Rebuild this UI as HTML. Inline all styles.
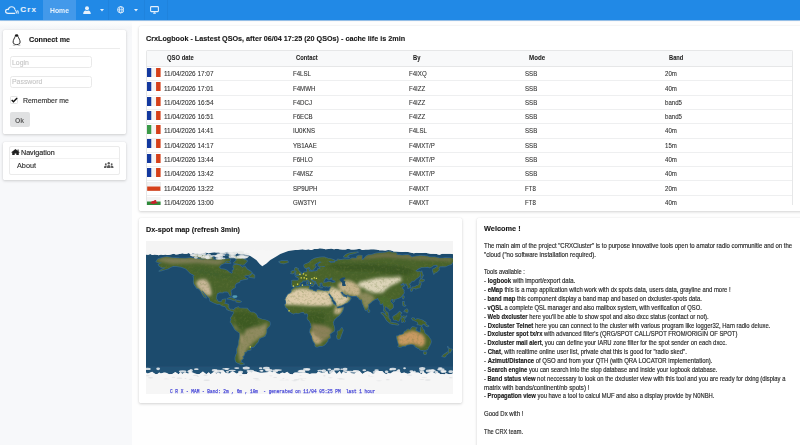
<!DOCTYPE html>
<html><head><meta charset="utf-8">
<style>
*{margin:0;padding:0;box-sizing:border-box}
html,body{width:800px;height:445px;overflow:hidden;background:#fefefe;font-family:"Liberation Sans",sans-serif;color:#333}
.abs{position:absolute}
#nav{left:0;top:0;width:800px;height:20.4px;background:#2189e6;box-shadow:0 1px 0 rgba(40,130,220,.45),0 1.5px 1.5px rgba(0,0,0,.06);z-index:2}
#side{left:0;top:20px;width:131.5px;height:425px;background:linear-gradient(#fdfefe 1.5px,#f5f6f8 8px,#f7f8fa 20px)}
.card{position:absolute;background:#fff;border-radius:1.5px;box-shadow:0 1px 3px rgba(0,0,0,.17),0 0 1px rgba(0,0,0,.1)}
.t{position:absolute;white-space:pre;line-height:1;transform-origin:0 0}
.b{font-weight:700}
</style></head><body>
<div id="nav" class="abs">
<div class="abs" style="left:43px;top:0;width:33px;height:20.4px;background:#4399ea"></div>
<div class="t b" style="left:50.00px;top:6.64px;font-size:7.40px;color:#e6f1fc;transform:scaleX(0.9237)">Home</div>
<svg class="abs" style="left:4.5px;top:6px" width="14" height="8" viewBox="0 0 14 8"><path d="M3 7.3H10.2M3 7.3C1.5 7.3.6 6.4.6 5.3S1.5 3.4 2.6 3.4c.3 0 .5 0 .7.1C3.7 1.8 5 .7 6.6.7c1.8 0 3.2 1.3 3.4 3" fill="none" stroke="#e6f1fc" stroke-width="1.15"/><path d="M10 4.2c.9.4 1.4 1.1 1.4 2 0 .5-.2.9-.4 1.2M12.4 4.5c.5.5.8 1.2.8 1.9 0 .5-.1.9-.4 1.3" fill="none" stroke="#e6f1fc" stroke-width="1.1"/></svg>
<div class="t b" style="left:20.30px;top:5.93px;font-size:8.00px;color:#e6f1fc;-webkit-text-stroke:0.10px #e6f1fc;letter-spacing:1.1px">Crx</div>
<svg class="abs" style="left:82.5px;top:5.8px" width="8" height="8" viewBox="0 0 8 8"><circle cx="4" cy="2.2" r="2" fill="#e6f1fc"/><path d="M.2 7.9c0-2.2 1.2-3.4 2.4-3.5.4.3.9.5 1.4.5s1-.2 1.4-.5c1.2.1 2.4 1.3 2.4 3.5z" fill="#e6f1fc"/></svg>
<svg class="abs" style="left:99.5px;top:9px" width="4" height="2.5" viewBox="0 0 4 2.5"><path d="M0 0h4L2 2.4z" fill="#e6f1fc"/></svg>
<div class="abs" style="left:108px;top:0;width:1px;height:20px;background:rgba(0,0,0,.04)"></div>
<svg class="abs" style="left:116.8px;top:6px" width="7.5" height="7.5" viewBox="0 0 8 8"><circle cx="4" cy="4" r="3.4" fill="none" stroke="#e6f1fc" stroke-width="1"/><ellipse cx="4" cy="4" rx="1.4" ry="3.4" fill="none" stroke="#e6f1fc" stroke-width=".9"/><path d="M.6 4h6.8" stroke="#e6f1fc" stroke-width=".8"/></svg>
<svg class="abs" style="left:133.5px;top:9px" width="4" height="2.5" viewBox="0 0 4 2.5"><path d="M0 0h4L2 2.4z" fill="#e6f1fc"/></svg>
<div class="abs" style="left:143.5px;top:0;width:1px;height:20px;background:rgba(0,0,0,.04)"></div>
<svg class="abs" style="left:150px;top:6px" width="9" height="8" viewBox="0 0 9 8"><rect x=".6" y=".6" width="7.8" height="5" rx=".8" fill="none" stroke="#e6f1fc" stroke-width="1.1"/><path d="M3 7.8h3L5.2 6.2H3.8z" fill="#e6f1fc"/></svg>
<div class="abs" style="left:167px;top:0;width:1px;height:20px;background:rgba(0,0,0,.04)"></div>
</div>
<div id="side" class="abs"></div>
<div class="card" style="left:3px;top:30.3px;width:123px;height:103.4px"></div>
<svg class="abs" style="left:12px;top:33.5px" width="9" height="12" viewBox="0 0 9 12"><ellipse cx="4.6" cy="1.55" rx="1.7" ry="1.25" fill="#1a1a1a"/><path d="M3.2 2.3C2.5 4.3 1.1 6 1.1 8.1 1.1 9.7 2.5 10.6 4.6 10.6S8.1 9.7 8.1 8.1C8.1 6 6.7 4.3 6 2.3" fill="none" stroke="#1a1a1a" stroke-width=".95"/><ellipse cx="2.2" cy="11.1" rx="1.6" ry=".55" fill="#aaa"/><ellipse cx="7" cy="11.1" rx="1.6" ry=".55" fill="#aaa"/></svg>
<div class="t b" style="left:28.60px;top:35.93px;font-size:8.00px;color:#151515;transform:scaleX(0.8976);-webkit-text-stroke:0.12px #151515">Connect me</div>
<div class="abs" style="left:9px;top:48px;width:111px;height:1px;background:#ececec"></div>
<div class="abs" style="left:9.5px;top:55.9px;width:82px;height:12.4px;border:1px solid #e9e9e9;border-radius:2.5px"></div>
<div class="t" style="left:11.75px;top:59.04px;font-size:7.40px;color:#c4c4c4;transform:scaleX(0.9333);-webkit-text-stroke:0.10px #c4c4c4">Login</div>
<div class="abs" style="left:9.5px;top:75.6px;width:82px;height:12.6px;border:1px solid #e9e9e9;border-radius:2.5px"></div>
<div class="t" style="left:11.75px;top:78.34px;font-size:7.40px;color:#c4c4c4;transform:scaleX(0.9357);-webkit-text-stroke:0.10px #c4c4c4">Password</div>
<div class="abs" style="left:9.5px;top:96px;width:8.5px;height:8.3px;border:1px solid #e2e2e2;border-radius:1.5px;background:#fff"></div>
<svg class="abs" style="left:10.5px;top:97px" width="7" height="6" viewBox="0 0 7 6"><path d="M.7 2.9l1.8 1.8L6.1 1" fill="none" stroke="#111" stroke-width="1.45"/></svg>
<div class="t" style="left:23.00px;top:96.64px;font-size:7.40px;color:#333;transform:scaleX(0.9378);-webkit-text-stroke:0.15px #333">Remember me</div>
<div class="abs" style="left:10px;top:111.7px;width:19.8px;height:15.2px;background:#e0e1e2;border-radius:2px"></div>
<div class="t b" style="left:14.90px;top:116.94px;font-size:7.40px;color:#5f5f5f;transform:scaleX(0.9216)">Ok</div>
<div class="card" style="left:3px;top:141.6px;width:123px;height:38px"></div>
<div class="abs" style="left:9.2px;top:146.4px;width:110.5px;height:28.8px;border:1px solid #ebebeb;border-radius:2px"></div>
<div class="abs" style="left:10px;top:157.5px;width:109px;height:1px;background:#f2f2f2"></div>
<svg class="abs" style="left:10.6px;top:148.8px" width="9" height="6.5" viewBox="0 0 9 6.5"><path d="M4.5 0L0 3.6h1.2V6.5h2.5V4.6h1.6v1.9h2.5V3.6H9L7.6 2.5V.6H6.6v1.1z" fill="#222"/></svg>
<div class="t" style="left:20.75px;top:148.70px;font-size:7.80px;color:#222;transform:scaleX(0.9154);-webkit-text-stroke:0.15px #222">Navigation</div>
<div class="t" style="left:16.70px;top:161.90px;font-size:7.80px;color:#333;transform:scaleX(0.9343);-webkit-text-stroke:0.15px #333">About</div>
<svg class="abs" style="left:104px;top:162.3px;opacity:.8" width="9.5" height="6" viewBox="0 0 9.5 6"><circle cx="4.75" cy="1.3" r="1.2" fill="#333"/><path d="M2.9 6c0-2 .8-2.9 1.85-2.9S6.6 4 6.6 6z" fill="#333"/><circle cx="1.8" cy="2.3" r=".95" fill="#333"/><path d="M0 6c0-1.6.7-2.4 1.8-2.4.5 0 .8.1 1.1.4-.4.5-.6 1.1-.6 2z" fill="#333"/><circle cx="7.7" cy="2.3" r=".95" fill="#333"/><path d="M9.5 6c0-1.6-.7-2.4-1.8-2.4-.5 0-.8.1-1.1.4.4.5.6 1.1.6 2z" fill="#333"/></svg>
<div class="card" style="left:139px;top:26px;width:670px;height:185px"></div>
<div class="t b" style="left:145.70px;top:34.83px;font-size:8.00px;color:#151515;transform:scaleX(0.9007);-webkit-text-stroke:0.12px #151515">CrxLogbook - Lastest QSOs, after 06/04 17:25 (20 QSOs) - cache life is 2min</div>
<div class="abs" style="left:145.7px;top:50.4px;width:647.6px;height:154.2px;overflow:hidden;border:1px solid #e6e7e8;border-bottom:none;border-radius:2px 2px 0 0">
<div class="abs" style="left:0;top:0;width:100%;height:16px;background:#f8f9fa;border-bottom:1px solid #e6e7e8"></div>
<div class="t b" style="left:20.30px;top:4.10px;font-size:6.50px;color:#222;transform:scaleX(0.9012);-webkit-text-stroke:0.05px #222">QSO date</div>
<div class="t b" style="left:149.70px;top:4.10px;font-size:6.50px;color:#222;transform:scaleX(0.8925);-webkit-text-stroke:0.05px #222">Contact</div>
<div class="t b" style="left:265.90px;top:4.10px;font-size:6.50px;color:#222;transform:scaleX(0.8896);-webkit-text-stroke:0.05px #222">By</div>
<div class="t b" style="left:382.80px;top:4.10px;font-size:6.50px;color:#222;transform:scaleX(0.9487);-webkit-text-stroke:0.05px #222">Mode</div>
<div class="t b" style="left:522.00px;top:4.10px;font-size:6.50px;color:#222;transform:scaleX(0.8800);-webkit-text-stroke:0.05px #222">Band</div>
<svg class="abs" style="left:0.50px;top:16.60px" width="13.6" height="9" viewBox="0 0 13.6 9"><rect width="4.53" height="9" fill="#13399f"/><rect x="4.53" width="4.54" height="9" fill="#f4f4f4"/><rect x="9.07" width="4.53" height="9" fill="#d5401a"/></svg>
<div class="t" style="left:17.10px;top:19.84px;font-size:6.80px;color:#333;transform:scaleX(0.9441);-webkit-text-stroke:0.10px #333">11/04/2026 17:07</div>
<div class="t" style="left:145.90px;top:19.84px;font-size:6.80px;color:#333;transform:scaleX(0.8971);-webkit-text-stroke:0.10px #333">F4LSL</div>
<div class="t" style="left:262.30px;top:19.84px;font-size:6.80px;color:#333;transform:scaleX(0.8971);-webkit-text-stroke:0.10px #333">F4IXQ</div>
<div class="t" style="left:378.70px;top:19.84px;font-size:6.80px;color:#333;transform:scaleX(0.8971);-webkit-text-stroke:0.10px #333">SSB</div>
<div class="t" style="left:518.20px;top:19.84px;font-size:6.80px;color:#333;transform:scaleX(0.8971);-webkit-text-stroke:0.10px #333">20m</div>
<div class="abs" style="left:0;top:29.00px;width:100%;height:1px;background:#eeeff0"></div>
<svg class="abs" style="left:0.50px;top:30.90px" width="13.6" height="9" viewBox="0 0 13.6 9"><rect width="4.53" height="9" fill="#13399f"/><rect x="4.53" width="4.54" height="9" fill="#f4f4f4"/><rect x="9.07" width="4.53" height="9" fill="#d5401a"/></svg>
<div class="t" style="left:17.10px;top:34.14px;font-size:6.80px;color:#333;transform:scaleX(0.9441);-webkit-text-stroke:0.10px #333">11/04/2026 17:01</div>
<div class="t" style="left:145.90px;top:34.14px;font-size:6.80px;color:#333;transform:scaleX(0.8971);-webkit-text-stroke:0.10px #333">F4MWH</div>
<div class="t" style="left:262.30px;top:34.14px;font-size:6.80px;color:#333;transform:scaleX(0.8971);-webkit-text-stroke:0.10px #333">F4IZZ</div>
<div class="t" style="left:378.70px;top:34.14px;font-size:6.80px;color:#333;transform:scaleX(0.8971);-webkit-text-stroke:0.10px #333">SSB</div>
<div class="t" style="left:518.20px;top:34.14px;font-size:6.80px;color:#333;transform:scaleX(0.8971);-webkit-text-stroke:0.10px #333">40m</div>
<div class="abs" style="left:0;top:43.30px;width:100%;height:1px;background:#eeeff0"></div>
<svg class="abs" style="left:0.50px;top:45.20px" width="13.6" height="9" viewBox="0 0 13.6 9"><rect width="4.53" height="9" fill="#13399f"/><rect x="4.53" width="4.54" height="9" fill="#f4f4f4"/><rect x="9.07" width="4.53" height="9" fill="#d5401a"/></svg>
<div class="t" style="left:17.10px;top:48.44px;font-size:6.80px;color:#333;transform:scaleX(0.9441);-webkit-text-stroke:0.10px #333">11/04/2026 16:54</div>
<div class="t" style="left:145.90px;top:48.44px;font-size:6.80px;color:#333;transform:scaleX(0.8971);-webkit-text-stroke:0.10px #333">F4DCJ</div>
<div class="t" style="left:262.30px;top:48.44px;font-size:6.80px;color:#333;transform:scaleX(0.8971);-webkit-text-stroke:0.10px #333">F4IZZ</div>
<div class="t" style="left:378.70px;top:48.44px;font-size:6.80px;color:#333;transform:scaleX(0.8971);-webkit-text-stroke:0.10px #333">SSB</div>
<div class="t" style="left:518.20px;top:48.44px;font-size:6.80px;color:#333;transform:scaleX(0.8971);-webkit-text-stroke:0.10px #333">band5</div>
<div class="abs" style="left:0;top:57.60px;width:100%;height:1px;background:#eeeff0"></div>
<svg class="abs" style="left:0.50px;top:59.50px" width="13.6" height="9" viewBox="0 0 13.6 9"><rect width="4.53" height="9" fill="#13399f"/><rect x="4.53" width="4.54" height="9" fill="#f4f4f4"/><rect x="9.07" width="4.53" height="9" fill="#d5401a"/></svg>
<div class="t" style="left:17.10px;top:62.74px;font-size:6.80px;color:#333;transform:scaleX(0.9441);-webkit-text-stroke:0.10px #333">11/04/2026 16:51</div>
<div class="t" style="left:145.90px;top:62.74px;font-size:6.80px;color:#333;transform:scaleX(0.8971);-webkit-text-stroke:0.10px #333">F6ECB</div>
<div class="t" style="left:262.30px;top:62.74px;font-size:6.80px;color:#333;transform:scaleX(0.8971);-webkit-text-stroke:0.10px #333">F4IZZ</div>
<div class="t" style="left:378.70px;top:62.74px;font-size:6.80px;color:#333;transform:scaleX(0.8971);-webkit-text-stroke:0.10px #333">SSB</div>
<div class="t" style="left:518.20px;top:62.74px;font-size:6.80px;color:#333;transform:scaleX(0.8971);-webkit-text-stroke:0.10px #333">band5</div>
<div class="abs" style="left:0;top:71.90px;width:100%;height:1px;background:#eeeff0"></div>
<svg class="abs" style="left:0.50px;top:73.80px" width="13.6" height="9" viewBox="0 0 13.6 9"><rect width="4.53" height="9" fill="#3a9a48"/><rect x="4.53" width="4.54" height="9" fill="#f4f4f4"/><rect x="9.07" width="4.53" height="9" fill="#d5401a"/></svg>
<div class="t" style="left:17.10px;top:77.04px;font-size:6.80px;color:#333;transform:scaleX(0.9441);-webkit-text-stroke:0.10px #333">11/04/2026 14:41</div>
<div class="t" style="left:145.90px;top:77.04px;font-size:6.80px;color:#333;transform:scaleX(0.8971);-webkit-text-stroke:0.10px #333">IU0KNS</div>
<div class="t" style="left:262.30px;top:77.04px;font-size:6.80px;color:#333;transform:scaleX(0.8971);-webkit-text-stroke:0.10px #333">F4LSL</div>
<div class="t" style="left:378.70px;top:77.04px;font-size:6.80px;color:#333;transform:scaleX(0.8971);-webkit-text-stroke:0.10px #333">SSB</div>
<div class="t" style="left:518.20px;top:77.04px;font-size:6.80px;color:#333;transform:scaleX(0.8971);-webkit-text-stroke:0.10px #333">40m</div>
<div class="abs" style="left:0;top:86.20px;width:100%;height:1px;background:#eeeff0"></div>
<svg class="abs" style="left:0.50px;top:88.10px" width="13.6" height="9" viewBox="0 0 13.6 9"><rect width="4.53" height="9" fill="#13399f"/><rect x="4.53" width="4.54" height="9" fill="#f4f4f4"/><rect x="9.07" width="4.53" height="9" fill="#d5401a"/></svg>
<div class="t" style="left:17.10px;top:91.34px;font-size:6.80px;color:#333;transform:scaleX(0.9441);-webkit-text-stroke:0.10px #333">11/04/2026 14:17</div>
<div class="t" style="left:145.90px;top:91.34px;font-size:6.80px;color:#333;transform:scaleX(0.8971);-webkit-text-stroke:0.10px #333">YB1AAE</div>
<div class="t" style="left:262.30px;top:91.34px;font-size:6.80px;color:#333;transform:scaleX(0.8971);-webkit-text-stroke:0.10px #333">F4MXT/P</div>
<div class="t" style="left:378.70px;top:91.34px;font-size:6.80px;color:#333;transform:scaleX(0.8971);-webkit-text-stroke:0.10px #333">SSB</div>
<div class="t" style="left:518.20px;top:91.34px;font-size:6.80px;color:#333;transform:scaleX(0.8971);-webkit-text-stroke:0.10px #333">15m</div>
<div class="abs" style="left:0;top:100.50px;width:100%;height:1px;background:#eeeff0"></div>
<svg class="abs" style="left:0.50px;top:102.40px" width="13.6" height="9" viewBox="0 0 13.6 9"><rect width="4.53" height="9" fill="#13399f"/><rect x="4.53" width="4.54" height="9" fill="#f4f4f4"/><rect x="9.07" width="4.53" height="9" fill="#d5401a"/></svg>
<div class="t" style="left:17.10px;top:105.64px;font-size:6.80px;color:#333;transform:scaleX(0.9441);-webkit-text-stroke:0.10px #333">11/04/2026 13:44</div>
<div class="t" style="left:145.90px;top:105.64px;font-size:6.80px;color:#333;transform:scaleX(0.8971);-webkit-text-stroke:0.10px #333">F6HLO</div>
<div class="t" style="left:262.30px;top:105.64px;font-size:6.80px;color:#333;transform:scaleX(0.8971);-webkit-text-stroke:0.10px #333">F4MXT/P</div>
<div class="t" style="left:378.70px;top:105.64px;font-size:6.80px;color:#333;transform:scaleX(0.8971);-webkit-text-stroke:0.10px #333">SSB</div>
<div class="t" style="left:518.20px;top:105.64px;font-size:6.80px;color:#333;transform:scaleX(0.8971);-webkit-text-stroke:0.10px #333">40m</div>
<div class="abs" style="left:0;top:114.80px;width:100%;height:1px;background:#eeeff0"></div>
<svg class="abs" style="left:0.50px;top:116.70px" width="13.6" height="9" viewBox="0 0 13.6 9"><rect width="4.53" height="9" fill="#13399f"/><rect x="4.53" width="4.54" height="9" fill="#f4f4f4"/><rect x="9.07" width="4.53" height="9" fill="#d5401a"/></svg>
<div class="t" style="left:17.10px;top:119.94px;font-size:6.80px;color:#333;transform:scaleX(0.9441);-webkit-text-stroke:0.10px #333">11/04/2026 13:42</div>
<div class="t" style="left:145.90px;top:119.94px;font-size:6.80px;color:#333;transform:scaleX(0.8971);-webkit-text-stroke:0.10px #333">F4MSZ</div>
<div class="t" style="left:262.30px;top:119.94px;font-size:6.80px;color:#333;transform:scaleX(0.8971);-webkit-text-stroke:0.10px #333">F4MXT/P</div>
<div class="t" style="left:378.70px;top:119.94px;font-size:6.80px;color:#333;transform:scaleX(0.8971);-webkit-text-stroke:0.10px #333">SSB</div>
<div class="t" style="left:518.20px;top:119.94px;font-size:6.80px;color:#333;transform:scaleX(0.8971);-webkit-text-stroke:0.10px #333">40m</div>
<div class="abs" style="left:0;top:129.10px;width:100%;height:1px;background:#eeeff0"></div>
<svg class="abs" style="left:0.50px;top:131.00px" width="13.6" height="9" viewBox="0 0 13.6 9"><rect width="13.6" height="4.5" fill="#f2f2f2"/><rect y="4.5" width="13.6" height="4.5" fill="#d5401a"/><rect width="13.6" height="9" fill="none" stroke="#ddd" stroke-width=".4"/></svg>
<div class="t" style="left:17.10px;top:134.24px;font-size:6.80px;color:#333;transform:scaleX(0.9441);-webkit-text-stroke:0.10px #333">11/04/2026 13:22</div>
<div class="t" style="left:145.90px;top:134.24px;font-size:6.80px;color:#333;transform:scaleX(0.8971);-webkit-text-stroke:0.10px #333">SP9UPH</div>
<div class="t" style="left:262.30px;top:134.24px;font-size:6.80px;color:#333;transform:scaleX(0.8971);-webkit-text-stroke:0.10px #333">F4MXT</div>
<div class="t" style="left:378.70px;top:134.24px;font-size:6.80px;color:#333;transform:scaleX(0.8971);-webkit-text-stroke:0.10px #333">FT8</div>
<div class="t" style="left:518.20px;top:134.24px;font-size:6.80px;color:#333;transform:scaleX(0.8971);-webkit-text-stroke:0.10px #333">20m</div>
<div class="abs" style="left:0;top:143.40px;width:100%;height:1px;background:#eeeff0"></div>
<svg class="abs" style="left:0.50px;top:145.30px" width="13.6" height="9" viewBox="0 0 13.6 9"><rect width="13.6" height="4.5" fill="#f4f4f4"/><rect y="4.5" width="13.6" height="4.5" fill="#2f8a3a"/><path d="M3 6.5c1-2 2-2.8 3.5-2.5.8-1 2-1.3 3-.8-.6.3-.8.8-.6 1.3 1 .3 1.6 1 1.8 2-.8-.4-1.6-.4-2.3 0-.9.5-2 .5-3 .2-.8-.3-1.6-.3-2.4-.2z" fill="#c8202a"/></svg>
<div class="t" style="left:17.10px;top:148.54px;font-size:6.80px;color:#333;transform:scaleX(0.9441);-webkit-text-stroke:0.10px #333">11/04/2026 13:00</div>
<div class="t" style="left:145.90px;top:148.54px;font-size:6.80px;color:#333;transform:scaleX(0.8971);-webkit-text-stroke:0.10px #333">GW3TYI</div>
<div class="t" style="left:262.30px;top:148.54px;font-size:6.80px;color:#333;transform:scaleX(0.8971);-webkit-text-stroke:0.10px #333">F4MXT</div>
<div class="t" style="left:378.70px;top:148.54px;font-size:6.80px;color:#333;transform:scaleX(0.8971);-webkit-text-stroke:0.10px #333">FT8</div>
<div class="t" style="left:518.20px;top:148.54px;font-size:6.80px;color:#333;transform:scaleX(0.8971);-webkit-text-stroke:0.10px #333">40m</div>
</div>
<div class="card" style="left:139px;top:218px;width:323.3px;height:184.5px"></div>
<div class="t b" style="left:145.60px;top:225.83px;font-size:8.00px;color:#151515;transform:scaleX(0.9036);-webkit-text-stroke:0.12px #151515">Dx-spot map (refresh 3min)</div>
<svg class="abs" style="left:145.70px;top:241.00px" width="307.60" height="152.80" viewBox="-180 -90 360 180" preserveAspectRatio="none">
<defs><filter id="bl" x="-5%" y="-5%" width="110%" height="110%"><feGaussianBlur stdDeviation="0.55"/></filter><filter id="bl2" x="-20%" y="-20%" width="140%" height="140%"><feGaussianBlur stdDeviation="1.6"/></filter></defs>
<rect x="-180" y="-90" width="360" height="180" fill="#f5f5f5"/>
<g filter="url(#bl)">
<path d="M-180.0 -74.2 L-177.5 -73.9 L-175.0 -74.6 L-172.5 -73.6 L-170.0 -74.2 L-167.5 -73.9 L-165.0 -73.3 L-162.5 -74.1 L-160.0 -73.4 L-157.5 -74.1 L-155.0 -73.6 L-152.5 -73.8 L-150.0 -74.4 L-147.5 -75.1 L-145.0 -74.1 L-142.5 -74.3 L-140.0 -75.0 L-137.5 -75.6 L-135.0 -75.1 L-132.5 -74.9 L-130.0 -75.9 L-127.5 -74.5 L-125.0 -75.9 L-122.5 -75.1 L-120.0 -74.9 L-116.7 -75.1 L-113.3 -75.5 L-110.0 -76.5 L-106.7 -75.7 L-103.3 -76.5 L-100.0 -76.7 L-97.5 -76.4 L-95.0 -76.7 L-92.5 -76.1 L-90.0 -76.1 L-87.5 -76.4 L-85.0 -77.3 L-82.5 -77.1 L-80.0 -77.0 L-77.5 -77.6 L-75.0 -77.6 L-72.5 -77.5 L-70.0 -78.5 L-68.3 -78.5 L-66.7 -77.9 L-65.0 -78.6 L-63.3 -78.7 L-61.7 -79.4 L-60.0 -79.4 L-56.7 -78.7 L-53.3 -79.9 L-50.0 -78.6 L-46.7 -79.2 L-43.3 -79.8 L-40.0 -78.9 L-36.7 -79.4 L-33.3 -78.6 L-30.0 -79.5 L-26.7 -79.6 L-23.3 -79.2 L-20.0 -79.6 L-16.7 -78.8 L-13.3 -79.5 L-10.0 -79.4 L-6.7 -79.5 L-3.3 -79.3 L0.0 -80.0 L3.3 -80.4 L6.7 -79.8 L10.0 -80.3 L13.3 -79.5 L16.7 -80.7 L20.0 -80.7 L23.3 -81.4 L26.7 -81.2 L30.0 -80.4 L33.3 -80.7 L36.7 -81.2 L40.0 -80.2 L43.3 -80.9 L46.7 -80.3 L50.0 -80.1 L53.3 -80.0 L56.7 -81.0 L60.0 -79.9 L63.3 -80.0 L66.7 -80.2 L70.0 -80.8 L73.3 -79.5 L76.7 -80.0 L80.0 -80.1 L83.3 -80.4 L86.7 -80.2 L90.0 -80.1 L93.3 -79.0 L96.7 -79.0 L100.0 -78.8 L103.3 -79.4 L106.7 -79.2 L110.0 -77.7 L113.3 -77.5 L116.7 -77.3 L120.0 -77.1 L123.3 -77.2 L126.7 -77.1 L130.0 -76.4 L133.3 -75.7 L136.7 -76.1 L140.0 -75.8 L143.3 -75.9 L146.7 -76.2 L150.0 -75.6 L153.3 -75.0 L156.7 -74.9 L160.0 -74.8 L163.3 -73.8 L166.7 -75.1 L170.0 -74.9 L173.3 -75.1 L176.7 -75.0 L180.0 -74.5 L180.0 65.5 L177.5 66.7 L174.4 66.9 L172.7 66.3 L170.8 65.7 L169.2 67.2 L167.3 66.8 L164.9 67.1 L161.2 64.5 L159.4 66.1 L157.0 65.6 L155.2 63.5 L151.2 65.1 L148.5 66.8 L146.7 65.7 L144.6 63.6 L142.7 67.1 L138.8 64.9 L136.9 64.8 L135.4 64.9 L131.4 63.4 L128.2 66.1 L125.8 66.5 L122.3 64.9 L118.9 65.7 L116.8 63.6 L112.9 63.4 L109.4 63.6 L106.0 66.2 L103.2 65.6 L101.6 67.1 L99.4 66.1 L96.2 63.0 L93.6 63.1 L89.6 63.0 L87.2 66.2 L85.1 66.3 L83.1 64.5 L79.4 63.5 L76.7 64.3 L73.2 66.8 L70.0 63.2 L66.6 63.9 L63.9 66.4 L60.4 65.7 L56.9 62.9 L54.4 65.4 L50.5 64.0 L48.6 66.6 L46.7 63.2 L43.2 66.6 L39.7 62.9 L36.5 65.7 L33.6 66.6 L32.1 62.9 L29.0 64.9 L25.1 65.3 L21.5 63.6 L19.4 66.1 L17.2 66.1 L14.2 66.1 L11.7 66.6 L7.9 65.6 L5.3 64.6 L1.5 65.3 L-2.3 65.0 L-5.1 64.9 L-6.7 65.3 L-8.6 67.2 L-12.1 66.4 L-14.8 64.0 L-17.7 65.8 L-20.5 64.8 L-23.9 66.7 L-26.8 66.1 L-29.0 63.8 L-31.8 64.7 L-35.2 63.2 L-37.8 64.5 L-40.6 64.9 L-43.8 65.2 L-46.6 65.1 L-50.5 64.1 L-54.2 63.1 L-56.3 64.7 L-60.2 63.5 L-62.0 66.7 L-64.6 66.9 L-66.7 66.9 L-69.9 63.8 L-73.7 66.5 L-76.9 64.3 L-78.8 63.3 L-82.7 66.2 L-86.6 65.4 L-89.3 62.8 L-92.9 66.5 L-95.5 64.9 L-97.8 66.3 L-100.1 64.0 L-101.7 64.8 L-104.3 67.1 L-106.6 64.5 L-109.4 66.9 L-113.4 63.7 L-117.3 66.7 L-119.4 67.0 L-122.9 66.0 L-124.7 65.3 L-128.5 63.6 L-130.6 66.5 L-134.4 64.7 L-137.7 66.8 L-139.3 64.2 L-141.9 66.9 L-145.7 64.4 L-149.2 66.8 L-152.9 66.9 L-156.5 65.2 L-158.9 64.8 L-162.7 66.0 L-164.5 64.9 L-166.6 66.7 L-168.5 67.0 L-170.5 65.8 L-172.8 63.9 L-175.0 65.0 L-177.0 65.7 L-178.5 66.1 L-180.0 65.0Z" fill="#1f4c6d"/>
<rect x="-180" y="58" width="360" height="8" fill="#2a5a80" opacity=".5"/>
</g>
<g filter="url(#bl)">
<g fill="none" stroke="#3b6f96" stroke-width="1.6" stroke-linejoin="round" opacity=".8">
<path d="M-168.0 -65.6 L-166.0 -68.5 L-161.0 -70.3 L-156.0 -71.4 L-150.0 -70.4 L-141.0 -69.7 L-134.0 -69.5 L-128.0 -70.2 L-121.0 -69.5 L-114.0 -68.3 L-108.0 -68.7 L-98.0 -67.8 L-94.0 -69.0 L-89.0 -68.5 L-82.0 -69.5 L-81.5 -66.5 L-86.0 -66.0 L-88.0 -64.2 L-92.5 -62.0 L-94.5 -59.0 L-92.5 -57.0 L-88.0 -56.5 L-85.0 -55.2 L-82.3 -53.0 L-80.0 -51.3 L-78.5 -52.5 L-79.0 -55.0 L-76.5 -57.0 L-78.0 -59.0 L-77.5 -61.5 L-74.0 -62.3 L-70.0 -61.0 L-67.0 -58.5 L-64.5 -60.2 L-61.5 -56.5 L-58.0 -54.5 L-56.0 -52.5 L-59.5 -50.0 L-65.0 -49.2 L-64.0 -47.0 L-61.0 -45.5 L-66.0 -44.5 L-70.0 -43.7 L-70.5 -41.7 L-74.0 -40.5 L-76.0 -38.0 L-75.8 -35.3 L-78.5 -33.8 L-81.0 -31.8 L-80.2 -27.5 L-80.5 -25.2 L-81.8 -26.0 L-82.8 -28.0 L-84.0 -30.0 L-86.0 -30.4 L-89.5 -30.2 L-90.0 -29.2 L-94.0 -29.6 L-97.0 -27.8 L-97.5 -25.0 L-97.8 -22.0 L-95.8 -19.0 L-94.0 -18.2 L-91.5 -18.5 L-90.5 -20.8 L-87.0 -21.5 L-87.5 -18.5 L-88.3 -16.0 L-86.0 -15.9 L-83.5 -15.0 L-83.5 -11.5 L-81.5 -9.0 L-79.5 -9.5 L-77.5 -8.5 L-77.5 -7.2 L-80.0 -7.3 L-81.0 -8.0 L-83.0 -8.3 L-85.7 -10.0 L-86.0 -11.5 L-87.5 -13.0 L-91.5 -14.0 L-94.0 -16.0 L-96.5 -15.7 L-100.0 -17.0 L-105.0 -19.5 L-105.5 -22.5 L-108.0 -25.0 L-111.0 -27.8 L-113.0 -30.5 L-114.7 -31.7 L-114.0 -30.0 L-112.0 -27.0 L-110.0 -24.0 L-109.5 -23.0 L-112.0 -24.5 L-114.0 -27.5 L-115.0 -29.8 L-117.0 -32.5 L-118.5 -34.0 L-120.6 -34.5 L-122.5 -37.5 L-123.8 -39.5 L-124.3 -42.0 L-124.0 -46.5 L-124.7 -48.4 L-123.0 -49.0 L-125.0 -50.5 L-128.0 -52.0 L-130.5 -54.5 L-133.0 -57.0 L-136.0 -58.5 L-139.5 -59.7 L-144.0 -60.2 L-148.0 -60.5 L-151.5 -59.2 L-154.0 -57.5 L-157.5 -56.5 L-161.0 -55.5 L-164.5 -54.5 L-162.0 -56.0 L-158.0 -58.0 L-157.0 -58.8 L-161.5 -58.7 L-164.5 -60.5 L-165.5 -62.3 L-164.0 -63.2 L-161.0 -64.5 L-165.0 -64.6 L-168.0 -65.6Z"/>
<path d="M-61.5 -66.5 L-64.5 -63.0 L-66.5 -61.8 L-71.5 -63.0 L-77.5 -64.2 L-73.5 -67.8 L-76.0 -70.0 L-80.0 -72.5 L-88.0 -73.5 L-78.5 -73.3 L-71.0 -71.0 L-67.0 -69.5 L-61.5 -66.5Z"/>
<path d="M-118.0 -73.0 L-119.0 -71.0 L-117.0 -69.8 L-109.0 -68.5 L-101.0 -68.5 L-101.0 -70.0 L-105.0 -73.0 L-112.0 -73.5 L-118.0 -73.0Z"/>
<path d="M-125.0 -72.0 L-123.0 -71.0 L-116.0 -71.5 L-119.0 -74.5 L-125.0 -74.0 L-125.0 -72.0Z"/>
<path d="M-87.0 -64.0 L-81.0 -64.0 L-84.0 -66.0 L-87.0 -64.0Z"/>
<path d="M-59.3 -47.6 L-53.0 -46.7 L-53.0 -49.5 L-55.5 -51.5 L-59.3 -47.6Z"/>
<path d="M-85.0 -21.9 L-82.0 -23.2 L-77.0 -22.0 L-74.2 -20.2 L-77.5 -19.9 L-81.0 -21.6 L-85.0 -21.9Z"/>
<path d="M-74.5 -19.8 L-72.0 -19.9 L-68.5 -18.6 L-71.0 -17.6 L-74.4 -18.3 L-74.5 -19.8Z"/>
<path d="M-77.5 -8.5 L-75.5 -10.8 L-72.0 -12.2 L-71.0 -11.0 L-68.0 -10.7 L-64.0 -10.6 L-61.5 -10.5 L-60.0 -8.5 L-57.5 -6.2 L-54.0 -5.8 L-51.5 -4.2 L-50.0 -1.8 L-49.5 0.0 L-48.0 1.0 L-44.5 2.3 L-41.5 2.9 L-38.5 3.8 L-35.2 5.5 L-34.9 8.0 L-35.5 10.0 L-37.5 12.0 L-39.0 14.0 L-39.0 17.5 L-39.7 19.5 L-41.0 22.0 L-43.0 23.0 L-45.0 23.6 L-47.5 25.0 L-48.5 27.5 L-49.0 29.0 L-51.0 31.0 L-52.5 33.0 L-53.8 34.5 L-55.0 35.0 L-57.0 35.0 L-58.3 34.0 L-57.5 36.5 L-57.5 38.2 L-62.0 39.0 L-62.5 40.5 L-65.0 41.0 L-64.5 42.5 L-65.5 45.0 L-67.5 46.5 L-66.0 48.0 L-68.0 50.0 L-69.0 51.5 L-68.5 52.5 L-70.5 53.5 L-72.0 54.0 L-74.5 52.5 L-75.5 50.0 L-75.5 47.0 L-74.5 44.0 L-73.5 42.0 L-73.7 39.0 L-73.5 37.0 L-72.5 35.0 L-71.6 32.0 L-71.5 28.5 L-70.5 25.0 L-70.2 21.5 L-70.3 18.5 L-71.5 17.5 L-74.5 15.5 L-76.0 14.0 L-77.0 12.0 L-78.5 9.5 L-79.8 7.0 L-81.2 5.5 L-80.5 3.5 L-80.0 2.3 L-80.9 1.0 L-80.0 -0.5 L-79.0 -1.5 L-78.8 -2.5 L-77.5 -4.0 L-77.3 -6.0 L-77.8 -7.5 L-77.5 -8.5Z"/>
<path d="M-68.5 52.7 L-65.0 55.0 L-69.0 55.5 L-71.0 54.5 L-68.5 52.7Z"/>
<path d="M-9.5 -39.0 L-8.8 -41.0 L-9.2 -43.2 L-7.0 -43.6 L-2.0 -43.4 L-1.4 -44.5 L-1.2 -46.2 L-2.5 -47.3 L-4.7 -48.0 L-3.0 -48.8 L-1.5 -48.7 L-1.3 -49.7 L0.2 -49.6 L1.5 -50.2 L2.5 -51.1 L3.8 -51.5 L4.5 -52.5 L5.0 -53.3 L7.0 -53.5 L8.5 -53.9 L8.6 -55.5 L8.1 -56.7 L10.0 -57.6 L10.5 -57.0 L10.2 -55.8 L11.0 -55.3 L10.0 -54.5 L12.0 -54.2 L14.0 -53.9 L16.5 -54.5 L19.0 -54.4 L21.0 -55.5 L21.0 -56.8 L21.5 -57.5 L23.5 -57.1 L24.3 -57.8 L24.0 -58.5 L23.4 -59.2 L25.5 -59.6 L28.0 -59.5 L30.0 -59.9 L28.5 -60.5 L26.0 -60.4 L22.8 -59.9 L21.5 -61.0 L21.5 -62.5 L23.0 -63.8 L25.3 -65.0 L25.2 -65.6 L23.0 -65.9 L21.2 -64.8 L19.0 -63.5 L17.5 -62.2 L17.2 -61.0 L18.8 -60.0 L18.5 -59.3 L16.5 -57.5 L16.0 -56.2 L14.5 -56.0 L13.0 -55.4 L12.8 -56.5 L11.8 -57.7 L11.2 -59.0 L10.5 -59.3 L9.5 -59.0 L8.0 -58.1 L6.5 -58.1 L5.5 -59.0 L5.1 -60.5 L5.0 -61.8 L6.0 -62.5 L8.5 -63.5 L10.5 -64.5 L12.5 -66.0 L14.0 -67.5 L15.5 -68.5 L17.5 -69.5 L20.0 -70.0 L23.0 -70.6 L26.0 -71.0 L28.5 -70.9 L31.0 -70.2 L33.0 -69.5 L36.0 -69.0 L40.0 -67.7 L41.0 -66.8 L39.5 -66.0 L35.0 -66.5 L33.5 -66.5 L35.0 -65.0 L37.0 -64.0 L39.5 -64.6 L40.5 -64.5 L42.0 -66.5 L44.0 -66.0 L44.0 -68.3 L46.0 -68.3 L46.5 -67.7 L53.0 -68.5 L54.5 -68.3 L59.0 -68.5 L61.0 -69.8 L66.0 -69.5 L67.0 -70.8 L66.8 -71.8 L69.0 -72.9 L72.7 -72.8 L72.5 -71.0 L72.8 -68.0 L74.0 -67.5 L74.5 -68.5 L77.5 -71.8 L80.5 -73.6 L84.0 -73.8 L86.5 -74.5 L87.0 -75.1 L93.0 -75.9 L98.0 -76.2 L101.0 -76.5 L104.0 -77.7 L106.0 -77.3 L107.5 -76.5 L112.0 -76.4 L113.5 -75.5 L113.0 -73.7 L116.0 -73.6 L120.0 -73.0 L124.0 -73.5 L127.0 -73.5 L129.0 -72.5 L131.0 -71.0 L135.0 -71.6 L139.0 -72.3 L141.0 -72.7 L146.0 -72.3 L150.0 -71.7 L152.5 -70.9 L158.0 -70.9 L160.0 -70.5 L163.0 -69.7 L167.0 -69.6 L170.5 -70.1 L175.7 -69.9 L180.0 -69.0 L180.0 -65.2 L178.5 -64.6 L177.5 -62.5 L174.5 -61.8 L170.5 -60.0 L167.0 -60.3 L163.5 -59.9 L163.0 -58.0 L162.0 -57.8 L163.1 -56.2 L161.8 -54.9 L160.0 -53.2 L158.5 -52.9 L156.8 -51.0 L156.4 -52.5 L155.5 -55.5 L155.9 -56.8 L158.3 -58.0 L160.2 -59.3 L161.9 -60.3 L160.1 -61.6 L159.3 -61.8 L156.7 -61.4 L154.2 -59.8 L152.8 -58.9 L151.3 -58.8 L149.8 -59.7 L146.0 -59.2 L142.2 -59.0 L139.0 -57.5 L135.1 -54.7 L137.2 -54.0 L138.2 -53.8 L139.9 -54.2 L141.4 -53.1 L141.4 -52.2 L140.6 -51.2 L140.5 -50.0 L140.1 -48.4 L138.5 -47.0 L136.2 -45.5 L133.5 -42.8 L132.0 -43.3 L130.8 -42.4 L129.7 -41.0 L129.2 -40.3 L128.0 -39.5 L127.5 -39.8 L128.3 -38.6 L129.5 -37.0 L129.4 -35.5 L126.5 -34.4 L126.4 -36.7 L126.0 -37.8 L125.2 -37.7 L124.7 -38.0 L125.2 -39.4 L124.0 -39.8 L121.6 -39.4 L121.8 -40.9 L121.0 -40.9 L119.0 -39.3 L117.7 -38.7 L118.1 -38.0 L119.0 -37.2 L120.8 -37.9 L122.5 -37.4 L120.6 -36.1 L119.2 -34.9 L120.6 -33.4 L121.9 -31.7 L121.2 -30.7 L122.0 -29.8 L121.7 -28.2 L120.4 -27.0 L119.6 -25.7 L118.7 -24.5 L115.9 -22.8 L114.8 -22.7 L113.2 -22.0 L111.8 -21.5 L110.8 -21.4 L110.2 -20.1 L109.6 -21.0 L108.5 -21.7 L106.7 -20.7 L105.7 -19.0 L106.4 -18.0 L107.4 -16.7 L108.9 -15.3 L109.3 -13.4 L109.2 -11.7 L108.0 -10.6 L106.2 -9.4 L105.0 -8.6 L104.8 -9.2 L105.1 -10.0 L104.3 -10.5 L103.0 -10.9 L102.6 -12.2 L101.7 -12.6 L100.8 -12.6 L100.9 -13.4 L100.1 -13.4 L100.0 -12.3 L99.2 -10.9 L99.5 -9.2 L100.3 -8.3 L100.5 -7.4 L101.6 -6.7 L102.4 -6.1 L103.4 -4.9 L103.3 -3.7 L103.5 -2.8 L104.2 -1.6 L103.5 -1.2 L102.2 -2.2 L101.4 -2.8 L100.7 -3.9 L100.3 -5.3 L100.1 -6.5 L99.7 -6.8 L98.5 -8.4 L98.3 -7.8 L98.2 -8.4 L98.3 -9.3 L98.6 -10.5 L98.6 -12.0 L98.3 -13.1 L97.8 -14.8 L97.6 -16.1 L97.2 -16.9 L95.4 -15.7 L94.8 -15.8 L94.2 -16.0 L94.3 -18.2 L93.5 -19.4 L93.7 -19.7 L93.1 -19.9 L92.1 -21.2 L92.0 -22.0 L91.4 -22.8 L90.5 -22.8 L90.6 -22.4 L90.3 -21.8 L89.8 -22.0 L89.0 -22.1 L88.9 -21.7 L88.2 -21.7 L86.5 -20.2 L85.1 -19.5 L83.9 -18.3 L82.2 -17.0 L81.7 -16.3 L80.8 -16.0 L80.3 -15.9 L80.0 -15.1 L80.2 -13.8 L80.3 -13.0 L79.9 -12.1 L79.9 -10.4 L79.3 -10.3 L78.9 -9.5 L79.2 -9.2 L78.3 -8.9 L77.5 -8.0 L76.6 -8.9 L76.1 -10.3 L75.7 -11.3 L74.9 -12.7 L74.6 -14.0 L73.5 -16.0 L73.1 -17.9 L72.8 -19.2 L72.8 -20.4 L72.6 -21.4 L71.2 -20.8 L70.5 -21.0 L69.2 -22.1 L69.6 -22.5 L68.2 -23.7 L67.4 -23.9 L66.4 -25.4 L64.5 -25.2 L61.5 -25.1 L59.6 -25.4 L57.4 -25.7 L56.8 -27.1 L55.7 -27.0 L54.7 -26.5 L53.5 -26.8 L52.5 -27.6 L51.5 -27.9 L50.1 -30.1 L48.9 -30.3 L48.0 -30.0 L47.6 -28.5 L48.4 -28.6 L48.8 -27.7 L49.3 -26.8 L50.1 -26.7 L50.2 -25.6 L50.5 -25.0 L51.0 -24.6 L51.4 -24.6 L51.6 -25.8 L51.3 -26.1 L51.6 -24.2 L52.6 -24.2 L54.0 -24.1 L55.0 -22.5 L56.0 -24.9 L56.4 -26.4 L56.5 -24.7 L57.4 -23.9 L58.7 -23.6 L59.8 -22.5 L59.3 -21.4 L58.5 -20.4 L57.7 -19.0 L56.6 -18.6 L56.3 -17.9 L55.3 -17.2 L53.6 -16.7 L52.4 -16.4 L52.2 -15.9 L49.6 -14.7 L48.7 -14.0 L47.4 -13.6 L45.9 -13.3 L44.5 -12.7 L43.5 -12.6 L43.2 -13.2 L43.0 -14.1 L42.6 -15.2 L42.8 -16.3 L42.5 -17.0 L41.8 -18.0 L41.2 -19.0 L39.1 -21.3 L39.0 -22.6 L38.5 -23.6 L37.5 -24.3 L37.2 -25.0 L36.6 -25.8 L35.6 -27.4 L35.1 -28.1 L34.6 -28.1 L34.9 -29.4 L34.6 -29.5 L34.4 -28.3 L33.9 -27.6 L33.1 -28.4 L32.4 -29.9 L32.3 -31.3 L34.3 -31.2 L34.9 -32.8 L35.5 -33.9 L36.0 -34.6 L35.9 -35.4 L36.2 -36.7 L35.6 -36.6 L34.7 -36.8 L34.0 -36.2 L32.5 -36.1 L31.7 -36.6 L30.6 -36.7 L30.4 -36.3 L29.7 -36.1 L28.7 -36.7 L27.6 -36.7 L27.0 -37.7 L26.3 -38.2 L26.8 -39.0 L26.2 -39.5 L27.3 -40.4 L28.8 -40.5 L29.2 -41.2 L31.1 -41.1 L32.3 -41.7 L33.5 -42.0 L35.2 -42.0 L36.9 -41.3 L38.3 -40.9 L39.5 -41.1 L40.4 -41.0 L41.6 -41.5 L41.7 -42.6 L40.9 -43.4 L39.9 -43.4 L38.7 -44.3 L37.5 -44.7 L36.7 -45.2 L37.4 -45.4 L38.2 -46.2 L37.7 -46.6 L39.1 -47.3 L37.4 -47.0 L35.0 -45.7 L35.5 -45.1 L36.5 -45.5 L36.3 -45.1 L33.9 -44.4 L32.6 -45.5 L33.6 -45.9 L31.7 -46.3 L30.7 -46.6 L30.4 -46.0 L29.6 -45.3 L29.1 -44.8 L28.6 -44.3 L28.7 -43.7 L28.0 -43.3 L27.7 -42.6 L28.0 -41.6 L29.0 -41.3 L28.8 -41.1 L27.6 -41.0 L26.4 -40.2 L26.1 -41.0 L24.9 -40.9 L23.7 -40.7 L24.4 -40.1 L23.3 -40.0 L22.8 -40.5 L22.8 -39.7 L23.4 -39.2 L23.5 -38.5 L24.0 -38.2 L24.0 -37.7 L23.1 -37.9 L23.4 -37.4 L22.8 -37.3 L23.2 -36.4 L22.5 -36.4 L21.7 -36.8 L21.3 -37.6 L21.1 -38.3 L20.2 -39.3 L20.0 -39.9 L19.4 -40.3 L19.4 -41.4 L19.2 -42.0 L18.5 -42.5 L17.5 -43.0 L16.0 -43.5 L15.2 -44.2 L14.9 -44.7 L14.3 -45.2 L13.7 -45.5 L13.0 -45.7 L12.3 -45.4 L12.3 -44.6 L12.6 -44.1 L13.5 -43.6 L14.0 -42.8 L15.1 -42.0 L16.2 -41.7 L15.9 -41.5 L17.5 -40.9 L18.5 -40.2 L18.3 -39.8 L17.7 -40.3 L16.9 -40.4 L16.4 -39.8 L17.2 -39.4 L16.6 -38.8 L16.1 -38.0 L15.7 -37.9 L15.9 -38.8 L15.4 -40.0 L14.7 -40.6 L14.0 -40.8 L12.9 -41.3 L11.2 -42.4 L10.5 -42.9 L10.2 -43.9 L8.9 -44.4 L7.9 -43.8 L6.5 -43.1 L4.6 -43.4 L3.1 -43.1 L3.0 -41.9 L2.1 -41.2 L0.8 -41.0 L0.1 -40.1 L-0.3 -39.3 L0.1 -38.7 L-0.7 -37.6 L-1.4 -37.4 L-2.1 -36.7 L-4.4 -36.7 L-5.4 -35.9 L-6.2 -36.4 L-6.5 -36.9 L-7.5 -37.1 L-8.9 -36.9 L-8.7 -37.7 L-8.8 -38.3 L-9.5 -39.0Z"/>
<path d="M-17.1 -21.0 L-16.3 -22.6 L-16.0 -23.7 L-15.1 -24.5 L-14.4 -26.3 L-13.1 -27.6 L-11.7 -28.1 L-9.6 -29.9 L-9.8 -31.2 L-9.3 -32.6 L-7.7 -33.7 L-6.2 -35.1 L-5.9 -35.8 L-5.2 -35.8 L-3.6 -35.4 L-2.2 -35.2 L-1.2 -35.7 L0.5 -36.3 L3.2 -36.8 L4.8 -36.9 L6.3 -37.1 L8.4 -36.9 L9.5 -37.3 L10.2 -37.2 L11.0 -37.1 L10.6 -36.4 L10.9 -35.7 L10.8 -34.8 L10.1 -34.3 L10.9 -33.8 L11.5 -33.1 L13.1 -32.9 L15.2 -32.3 L15.7 -31.4 L18.0 -30.8 L19.1 -30.3 L20.1 -31.0 L19.8 -31.8 L20.9 -32.7 L22.9 -32.6 L24.0 -32.0 L26.5 -31.6 L28.5 -31.0 L30.1 -31.5 L32.0 -30.9 L33.8 -31.0 L34.3 -31.2 L34.3 -30.5 L34.6 -29.5 L34.4 -28.3 L33.9 -27.6 L33.1 -28.4 L32.4 -29.9 L32.7 -28.7 L34.1 -26.1 L35.7 -23.9 L35.5 -23.1 L36.9 -22.0 L37.2 -21.0 L37.1 -19.8 L37.5 -18.6 L38.4 -18.0 L39.3 -15.9 L41.2 -14.5 L42.3 -13.3 L43.1 -12.7 L43.3 -12.0 L42.7 -11.7 L43.5 -11.3 L44.1 -10.4 L45.6 -10.7 L47.5 -11.1 L48.9 -11.4 L50.3 -11.7 L51.1 -12.0 L51.0 -10.6 L50.6 -9.2 L49.5 -6.8 L47.7 -4.2 L45.6 -2.0 L43.1 -0.3 L41.8 1.4 L40.3 2.6 L39.6 4.3 L38.7 5.9 L39.4 6.8 L39.2 8.5 L39.9 10.1 L40.4 11.8 L40.6 14.2 L40.1 16.1 L38.5 17.1 L36.3 18.7 L34.8 19.8 L35.4 21.8 L35.5 23.1 L35.5 24.1 L33.0 25.4 L32.7 26.1 L32.5 28.3 L31.3 29.4 L30.1 31.1 L28.2 32.8 L26.4 33.6 L25.2 33.8 L23.6 33.8 L21.5 34.3 L20.1 34.8 L18.9 34.4 L18.2 33.9 L17.9 32.6 L18.2 31.7 L17.1 29.9 L15.6 27.8 L15.0 26.1 L14.4 23.9 L14.3 22.1 L13.4 20.9 L12.6 19.0 L11.7 17.3 L12.1 14.9 L12.7 13.1 L13.6 12.0 L13.7 10.7 L12.9 9.2 L13.2 8.6 L12.7 6.9 L12.2 6.3 L12.2 5.3 L11.1 4.0 L9.4 2.1 L8.8 0.8 L9.3 -0.3 L9.6 -2.3 L9.8 -3.1 L8.9 -3.9 L8.5 -4.8 L7.1 -4.5 L5.9 -4.3 L5.0 -5.6 L4.3 -6.3 L1.9 -6.1 L-0.5 -5.3 L-2.0 -4.7 L-4.0 -5.2 L-5.8 -5.0 L-7.5 -4.3 L-9.0 -5.0 L-10.8 -6.1 L-12.4 -7.3 L-13.1 -8.2 L-13.7 -9.5 L-14.7 -10.7 L-15.7 -11.5 L-16.6 -12.2 L-16.8 -13.2 L-17.1 -14.4 L-17.6 -14.7 L-16.7 -15.6 L-16.1 -16.5 L-16.1 -18.1 L-16.4 -19.6 L-16.5 -20.6 L-17.1 -21.0Z"/>
<path d="M113.3 22.0 L113.6 24.7 L114.2 26.3 L114.9 29.5 L115.7 31.6 L115.7 33.3 L115.0 34.2 L116.6 35.0 L118.0 35.1 L119.9 34.0 L121.3 33.8 L123.7 33.9 L124.5 32.9 L126.1 32.2 L129.5 31.6 L131.3 31.5 L134.3 32.6 L135.2 34.5 L135.9 34.9 L137.5 34.1 L137.8 32.9 L136.4 35.0 L137.4 35.8 L139.6 36.5 L140.6 38.0 L143.6 38.8 L144.9 38.1 L146.3 39.0 L147.4 38.2 L149.4 37.8 L150.0 36.4 L151.3 33.8 L152.5 32.1 L153.6 28.7 L153.1 26.1 L151.6 24.1 L150.6 22.6 L149.5 21.3 L147.7 19.9 L146.1 18.3 L145.5 16.3 L145.4 15.0 L144.0 14.3 L143.6 12.7 L142.5 10.7 L141.7 12.3 L141.5 13.7 L141.4 16.4 L140.9 17.4 L140.0 17.7 L138.4 16.8 L136.3 15.6 L135.4 15.0 L136.0 13.7 L136.9 12.3 L135.5 12.0 L133.6 11.5 L131.8 11.3 L130.2 13.1 L129.4 14.4 L129.6 15.2 L127.8 14.3 L126.1 14.1 L125.2 15.0 L124.2 16.3 L122.9 16.4 L122.2 17.4 L121.7 18.7 L121.1 19.6 L119.0 20.3 L116.7 20.7 L114.6 22.1 L113.3 22.0Z"/>
<path d="M145.0 40.8 L146.5 41.1 L148.3 40.9 L148.1 42.5 L147.0 43.6 L146.0 43.5 L145.0 42.5 L145.0 40.8Z"/>
<path d="M109.7 -1.5 L111.2 -1.9 L111.8 -2.9 L113.0 -3.1 L114.6 -4.9 L115.5 -5.4 L116.7 -6.9 L117.7 -6.4 L118.4 -5.0 L119.2 -5.4 L118.6 -4.5 L117.3 -3.2 L118.0 -2.3 L119.0 -0.9 L117.8 -0.8 L117.5 0.8 L116.6 1.5 L116.1 4.0 L114.9 4.1 L113.3 3.1 L111.0 3.0 L110.2 2.9 L109.6 1.3 L109.0 -0.4 L109.7 -1.5Z"/>
<path d="M95.3 -5.5 L97.5 -5.2 L99.1 -3.6 L100.6 -2.1 L102.5 -1.4 L103.8 -0.1 L104.4 1.8 L105.6 3.1 L106.1 3.1 L105.8 5.9 L104.7 5.9 L102.6 4.2 L101.4 2.8 L100.1 0.7 L98.6 -1.8 L97.2 -3.3 L95.4 -5.0 L95.3 -5.5Z"/>
<path d="M106.1 5.9 L108.3 6.2 L110.5 6.9 L112.6 6.9 L114.5 7.8 L115.7 8.4 L114.6 8.8 L112.6 8.4 L110.6 8.1 L108.3 7.8 L106.5 7.4 L105.4 6.9 L106.1 5.9Z"/>
<path d="M125.0 -1.6 L123.7 -0.2 L121.0 -0.4 L120.2 -0.2 L120.9 1.4 L123.3 0.6 L121.5 1.9 L122.5 3.2 L123.2 4.7 L122.2 5.3 L121.0 2.6 L120.3 2.9 L120.4 5.5 L119.4 5.4 L119.5 3.5 L118.8 2.8 L119.3 1.4 L120.0 -0.6 L120.9 -1.3 L124.1 -0.9 L125.0 -1.6Z"/>
<path d="M134.1 1.2 L134.4 2.8 L135.5 3.4 L137.4 1.7 L139.2 2.1 L141.0 2.6 L144.6 3.9 L145.8 5.0 L147.6 6.1 L147.2 7.4 L148.7 9.1 L150.0 9.7 L150.8 10.3 L150.0 10.7 L147.9 10.1 L146.6 8.9 L146.1 8.1 L144.7 7.6 L143.3 8.2 L143.4 9.0 L142.1 9.2 L141.0 9.1 L139.1 8.1 L137.6 8.4 L138.7 7.3 L137.9 5.4 L136.0 4.5 L133.7 3.5 L132.8 3.3 L132.0 2.8 L133.7 2.2 L132.2 2.2 L130.9 1.4 L131.9 0.7 L134.1 1.2Z"/>
<path d="M141.4 -41.4 L141.9 -39.2 L141.0 -37.1 L140.8 -35.3 L139.9 -35.0 L137.6 -34.6 L135.8 -33.5 L135.1 -34.6 L132.9 -34.1 L131.0 -34.0 L131.9 -35.6 L134.6 -35.7 L136.7 -37.3 L138.9 -37.8 L140.1 -39.4 L139.9 -40.6 L140.3 -41.2 L141.4 -41.4Z"/>
<path d="M141.9 -45.5 L143.1 -44.5 L145.3 -44.4 L145.5 -43.3 L143.2 -42.0 L141.6 -42.7 L140.0 -41.6 L140.3 -43.3 L141.7 -45.0 L141.9 -45.5Z"/>
<path d="M130.0 -31.0 L131.4 -31.4 L131.9 -33.0 L131.0 -33.9 L130.0 -33.5 L130.0 -31.0Z"/>
<path d="M79.9 -7.0 L80.0 -9.8 L81.8 -7.5 L81.2 -6.2 L80.3 -6.0 L79.9 -7.0Z"/>
<path d="M121.8 -25.0 L122.0 -23.5 L120.9 -21.9 L120.1 -23.6 L121.5 -25.3 L121.8 -25.0Z"/>
<path d="M110.3 -20.3 L111.0 -19.7 L109.4 -18.2 L108.6 -19.4 L110.3 -20.3Z"/>
<path d="M120.4 -18.5 L122.2 -18.5 L121.7 -15.9 L122.0 -14.9 L123.9 -13.8 L122.5 -13.4 L120.7 -14.3 L120.5 -16.2 L120.4 -18.5Z"/>
<path d="M126.4 -8.4 L126.2 -6.3 L125.4 -5.6 L123.9 -6.9 L122.1 -6.9 L123.5 -8.7 L125.4 -9.8 L126.4 -8.4Z"/>
<path d="M49.5 12.5 L50.5 15.2 L49.5 18.0 L48.5 20.5 L47.1 24.9 L45.4 25.6 L44.0 25.0 L43.3 22.0 L44.4 20.1 L44.0 17.4 L44.4 16.2 L46.3 15.8 L48.0 14.1 L48.9 12.5 L49.5 12.5Z"/>
<path d="M-5.7 -50.1 L-3.4 -50.3 L-0.8 -50.8 L1.4 -51.2 L1.7 -52.5 L0.6 -52.9 L-0.8 -54.5 L-1.8 -55.6 L-2.6 -56.1 L-1.8 -57.5 L-4.1 -57.6 L-3.5 -58.5 L-5.0 -58.6 L-6.1 -56.8 L-5.6 -55.3 L-3.1 -54.7 L-4.8 -53.4 L-4.6 -52.3 L-5.2 -51.8 L-3.1 -51.4 L-5.7 -50.1Z"/>
<path d="M-6.2 -53.9 L-6.1 -55.2 L-8.4 -54.7 L-10.0 -54.0 L-9.5 -52.5 L-10.4 -51.9 L-8.5 -51.7 L-6.8 -52.3 L-6.2 -53.9Z"/>
<path d="M-14.5 -66.5 L-13.6 -65.1 L-18.7 -63.5 L-21.8 -63.9 L-23.8 -64.9 L-22.2 -65.4 L-24.3 -65.6 L-21.8 -66.4 L-16.2 -66.5 L-14.5 -66.5Z"/>
<path d="M15.5 -38.2 L15.2 -36.6 L12.4 -37.6 L13.7 -38.1 L15.5 -38.2Z"/>
<path d="M9.2 -41.2 L9.8 -40.5 L9.6 -39.2 L8.4 -39.0 L8.2 -40.9 L9.2 -41.2Z"/>
<path d="M9.4 -43.0 L9.6 -42.2 L9.2 -41.4 L8.6 -42.3 L9.4 -43.0Z"/>
<path d="M23.5 -35.6 L26.3 -35.3 L26.0 -35.0 L24.0 -35.0 L23.5 -35.6Z"/>
<path d="M173.0 34.5 L175.3 37.2 L178.5 37.7 L177.2 39.1 L176.0 41.3 L174.7 41.3 L174.7 39.9 L173.8 39.5 L174.6 38.8 L174.3 36.7 L173.0 34.5Z"/>
<path d="M173.0 40.9 L174.2 41.3 L172.7 43.4 L171.2 44.2 L170.6 45.9 L169.3 46.6 L166.5 45.9 L168.3 44.1 L171.6 41.8 L173.0 40.9Z"/>
<path d="M143.6 -50.7 L144.7 -49.0 L143.2 -49.3 L142.6 -48.0 L143.5 -46.8 L142.1 -46.0 L142.0 -49.2 L141.4 -52.2 L142.6 -54.4 L143.6 -50.7Z"/>
<path d="M51.5 -71.5 L53.5 -73.7 L55.9 -75.0 L61.0 -76.3 L68.2 -76.9 L64.6 -75.7 L58.5 -74.3 L55.6 -72.4 L55.6 -71.5 L57.5 -70.7 L51.5 -71.5Z"/>
</g>
<g fill="#48632c">
<path d="M-168.0 -65.6 L-166.0 -68.5 L-161.0 -70.3 L-156.0 -71.4 L-150.0 -70.4 L-141.0 -69.7 L-134.0 -69.5 L-128.0 -70.2 L-121.0 -69.5 L-114.0 -68.3 L-108.0 -68.7 L-98.0 -67.8 L-94.0 -69.0 L-89.0 -68.5 L-82.0 -69.5 L-81.5 -66.5 L-86.0 -66.0 L-88.0 -64.2 L-92.5 -62.0 L-94.5 -59.0 L-92.5 -57.0 L-88.0 -56.5 L-85.0 -55.2 L-82.3 -53.0 L-80.0 -51.3 L-78.5 -52.5 L-79.0 -55.0 L-76.5 -57.0 L-78.0 -59.0 L-77.5 -61.5 L-74.0 -62.3 L-70.0 -61.0 L-67.0 -58.5 L-64.5 -60.2 L-61.5 -56.5 L-58.0 -54.5 L-56.0 -52.5 L-59.5 -50.0 L-65.0 -49.2 L-64.0 -47.0 L-61.0 -45.5 L-66.0 -44.5 L-70.0 -43.7 L-70.5 -41.7 L-74.0 -40.5 L-76.0 -38.0 L-75.8 -35.3 L-78.5 -33.8 L-81.0 -31.8 L-80.2 -27.5 L-80.5 -25.2 L-81.8 -26.0 L-82.8 -28.0 L-84.0 -30.0 L-86.0 -30.4 L-89.5 -30.2 L-90.0 -29.2 L-94.0 -29.6 L-97.0 -27.8 L-97.5 -25.0 L-97.8 -22.0 L-95.8 -19.0 L-94.0 -18.2 L-91.5 -18.5 L-90.5 -20.8 L-87.0 -21.5 L-87.5 -18.5 L-88.3 -16.0 L-86.0 -15.9 L-83.5 -15.0 L-83.5 -11.5 L-81.5 -9.0 L-79.5 -9.5 L-77.5 -8.5 L-77.5 -7.2 L-80.0 -7.3 L-81.0 -8.0 L-83.0 -8.3 L-85.7 -10.0 L-86.0 -11.5 L-87.5 -13.0 L-91.5 -14.0 L-94.0 -16.0 L-96.5 -15.7 L-100.0 -17.0 L-105.0 -19.5 L-105.5 -22.5 L-108.0 -25.0 L-111.0 -27.8 L-113.0 -30.5 L-114.7 -31.7 L-114.0 -30.0 L-112.0 -27.0 L-110.0 -24.0 L-109.5 -23.0 L-112.0 -24.5 L-114.0 -27.5 L-115.0 -29.8 L-117.0 -32.5 L-118.5 -34.0 L-120.6 -34.5 L-122.5 -37.5 L-123.8 -39.5 L-124.3 -42.0 L-124.0 -46.5 L-124.7 -48.4 L-123.0 -49.0 L-125.0 -50.5 L-128.0 -52.0 L-130.5 -54.5 L-133.0 -57.0 L-136.0 -58.5 L-139.5 -59.7 L-144.0 -60.2 L-148.0 -60.5 L-151.5 -59.2 L-154.0 -57.5 L-157.5 -56.5 L-161.0 -55.5 L-164.5 -54.5 L-162.0 -56.0 L-158.0 -58.0 L-157.0 -58.8 L-161.5 -58.7 L-164.5 -60.5 L-165.5 -62.3 L-164.0 -63.2 L-161.0 -64.5 L-165.0 -64.6 L-168.0 -65.6Z"/>
<path d="M-61.5 -66.5 L-64.5 -63.0 L-66.5 -61.8 L-71.5 -63.0 L-77.5 -64.2 L-73.5 -67.8 L-76.0 -70.0 L-80.0 -72.5 L-88.0 -73.5 L-78.5 -73.3 L-71.0 -71.0 L-67.0 -69.5 L-61.5 -66.5Z"/>
<path d="M-118.0 -73.0 L-119.0 -71.0 L-117.0 -69.8 L-109.0 -68.5 L-101.0 -68.5 L-101.0 -70.0 L-105.0 -73.0 L-112.0 -73.5 L-118.0 -73.0Z"/>
<path d="M-125.0 -72.0 L-123.0 -71.0 L-116.0 -71.5 L-119.0 -74.5 L-125.0 -74.0 L-125.0 -72.0Z"/>
<path d="M-87.0 -64.0 L-81.0 -64.0 L-84.0 -66.0 L-87.0 -64.0Z"/>
<path d="M-59.3 -47.6 L-53.0 -46.7 L-53.0 -49.5 L-55.5 -51.5 L-59.3 -47.6Z"/>
<path d="M-85.0 -21.9 L-82.0 -23.2 L-77.0 -22.0 L-74.2 -20.2 L-77.5 -19.9 L-81.0 -21.6 L-85.0 -21.9Z"/>
<path d="M-74.5 -19.8 L-72.0 -19.9 L-68.5 -18.6 L-71.0 -17.6 L-74.4 -18.3 L-74.5 -19.8Z"/>
<path d="M-77.5 -8.5 L-75.5 -10.8 L-72.0 -12.2 L-71.0 -11.0 L-68.0 -10.7 L-64.0 -10.6 L-61.5 -10.5 L-60.0 -8.5 L-57.5 -6.2 L-54.0 -5.8 L-51.5 -4.2 L-50.0 -1.8 L-49.5 0.0 L-48.0 1.0 L-44.5 2.3 L-41.5 2.9 L-38.5 3.8 L-35.2 5.5 L-34.9 8.0 L-35.5 10.0 L-37.5 12.0 L-39.0 14.0 L-39.0 17.5 L-39.7 19.5 L-41.0 22.0 L-43.0 23.0 L-45.0 23.6 L-47.5 25.0 L-48.5 27.5 L-49.0 29.0 L-51.0 31.0 L-52.5 33.0 L-53.8 34.5 L-55.0 35.0 L-57.0 35.0 L-58.3 34.0 L-57.5 36.5 L-57.5 38.2 L-62.0 39.0 L-62.5 40.5 L-65.0 41.0 L-64.5 42.5 L-65.5 45.0 L-67.5 46.5 L-66.0 48.0 L-68.0 50.0 L-69.0 51.5 L-68.5 52.5 L-70.5 53.5 L-72.0 54.0 L-74.5 52.5 L-75.5 50.0 L-75.5 47.0 L-74.5 44.0 L-73.5 42.0 L-73.7 39.0 L-73.5 37.0 L-72.5 35.0 L-71.6 32.0 L-71.5 28.5 L-70.5 25.0 L-70.2 21.5 L-70.3 18.5 L-71.5 17.5 L-74.5 15.5 L-76.0 14.0 L-77.0 12.0 L-78.5 9.5 L-79.8 7.0 L-81.2 5.5 L-80.5 3.5 L-80.0 2.3 L-80.9 1.0 L-80.0 -0.5 L-79.0 -1.5 L-78.8 -2.5 L-77.5 -4.0 L-77.3 -6.0 L-77.8 -7.5 L-77.5 -8.5Z"/>
<path d="M-68.5 52.7 L-65.0 55.0 L-69.0 55.5 L-71.0 54.5 L-68.5 52.7Z"/>
<path d="M-9.5 -39.0 L-8.8 -41.0 L-9.2 -43.2 L-7.0 -43.6 L-2.0 -43.4 L-1.4 -44.5 L-1.2 -46.2 L-2.5 -47.3 L-4.7 -48.0 L-3.0 -48.8 L-1.5 -48.7 L-1.3 -49.7 L0.2 -49.6 L1.5 -50.2 L2.5 -51.1 L3.8 -51.5 L4.5 -52.5 L5.0 -53.3 L7.0 -53.5 L8.5 -53.9 L8.6 -55.5 L8.1 -56.7 L10.0 -57.6 L10.5 -57.0 L10.2 -55.8 L11.0 -55.3 L10.0 -54.5 L12.0 -54.2 L14.0 -53.9 L16.5 -54.5 L19.0 -54.4 L21.0 -55.5 L21.0 -56.8 L21.5 -57.5 L23.5 -57.1 L24.3 -57.8 L24.0 -58.5 L23.4 -59.2 L25.5 -59.6 L28.0 -59.5 L30.0 -59.9 L28.5 -60.5 L26.0 -60.4 L22.8 -59.9 L21.5 -61.0 L21.5 -62.5 L23.0 -63.8 L25.3 -65.0 L25.2 -65.6 L23.0 -65.9 L21.2 -64.8 L19.0 -63.5 L17.5 -62.2 L17.2 -61.0 L18.8 -60.0 L18.5 -59.3 L16.5 -57.5 L16.0 -56.2 L14.5 -56.0 L13.0 -55.4 L12.8 -56.5 L11.8 -57.7 L11.2 -59.0 L10.5 -59.3 L9.5 -59.0 L8.0 -58.1 L6.5 -58.1 L5.5 -59.0 L5.1 -60.5 L5.0 -61.8 L6.0 -62.5 L8.5 -63.5 L10.5 -64.5 L12.5 -66.0 L14.0 -67.5 L15.5 -68.5 L17.5 -69.5 L20.0 -70.0 L23.0 -70.6 L26.0 -71.0 L28.5 -70.9 L31.0 -70.2 L33.0 -69.5 L36.0 -69.0 L40.0 -67.7 L41.0 -66.8 L39.5 -66.0 L35.0 -66.5 L33.5 -66.5 L35.0 -65.0 L37.0 -64.0 L39.5 -64.6 L40.5 -64.5 L42.0 -66.5 L44.0 -66.0 L44.0 -68.3 L46.0 -68.3 L46.5 -67.7 L53.0 -68.5 L54.5 -68.3 L59.0 -68.5 L61.0 -69.8 L66.0 -69.5 L67.0 -70.8 L66.8 -71.8 L69.0 -72.9 L72.7 -72.8 L72.5 -71.0 L72.8 -68.0 L74.0 -67.5 L74.5 -68.5 L77.5 -71.8 L80.5 -73.6 L84.0 -73.8 L86.5 -74.5 L87.0 -75.1 L93.0 -75.9 L98.0 -76.2 L101.0 -76.5 L104.0 -77.7 L106.0 -77.3 L107.5 -76.5 L112.0 -76.4 L113.5 -75.5 L113.0 -73.7 L116.0 -73.6 L120.0 -73.0 L124.0 -73.5 L127.0 -73.5 L129.0 -72.5 L131.0 -71.0 L135.0 -71.6 L139.0 -72.3 L141.0 -72.7 L146.0 -72.3 L150.0 -71.7 L152.5 -70.9 L158.0 -70.9 L160.0 -70.5 L163.0 -69.7 L167.0 -69.6 L170.5 -70.1 L175.7 -69.9 L180.0 -69.0 L180.0 -65.2 L178.5 -64.6 L177.5 -62.5 L174.5 -61.8 L170.5 -60.0 L167.0 -60.3 L163.5 -59.9 L163.0 -58.0 L162.0 -57.8 L163.1 -56.2 L161.8 -54.9 L160.0 -53.2 L158.5 -52.9 L156.8 -51.0 L156.4 -52.5 L155.5 -55.5 L155.9 -56.8 L158.3 -58.0 L160.2 -59.3 L161.9 -60.3 L160.1 -61.6 L159.3 -61.8 L156.7 -61.4 L154.2 -59.8 L152.8 -58.9 L151.3 -58.8 L149.8 -59.7 L146.0 -59.2 L142.2 -59.0 L139.0 -57.5 L135.1 -54.7 L137.2 -54.0 L138.2 -53.8 L139.9 -54.2 L141.4 -53.1 L141.4 -52.2 L140.6 -51.2 L140.5 -50.0 L140.1 -48.4 L138.5 -47.0 L136.2 -45.5 L133.5 -42.8 L132.0 -43.3 L130.8 -42.4 L129.7 -41.0 L129.2 -40.3 L128.0 -39.5 L127.5 -39.8 L128.3 -38.6 L129.5 -37.0 L129.4 -35.5 L126.5 -34.4 L126.4 -36.7 L126.0 -37.8 L125.2 -37.7 L124.7 -38.0 L125.2 -39.4 L124.0 -39.8 L121.6 -39.4 L121.8 -40.9 L121.0 -40.9 L119.0 -39.3 L117.7 -38.7 L118.1 -38.0 L119.0 -37.2 L120.8 -37.9 L122.5 -37.4 L120.6 -36.1 L119.2 -34.9 L120.6 -33.4 L121.9 -31.7 L121.2 -30.7 L122.0 -29.8 L121.7 -28.2 L120.4 -27.0 L119.6 -25.7 L118.7 -24.5 L115.9 -22.8 L114.8 -22.7 L113.2 -22.0 L111.8 -21.5 L110.8 -21.4 L110.2 -20.1 L109.6 -21.0 L108.5 -21.7 L106.7 -20.7 L105.7 -19.0 L106.4 -18.0 L107.4 -16.7 L108.9 -15.3 L109.3 -13.4 L109.2 -11.7 L108.0 -10.6 L106.2 -9.4 L105.0 -8.6 L104.8 -9.2 L105.1 -10.0 L104.3 -10.5 L103.0 -10.9 L102.6 -12.2 L101.7 -12.6 L100.8 -12.6 L100.9 -13.4 L100.1 -13.4 L100.0 -12.3 L99.2 -10.9 L99.5 -9.2 L100.3 -8.3 L100.5 -7.4 L101.6 -6.7 L102.4 -6.1 L103.4 -4.9 L103.3 -3.7 L103.5 -2.8 L104.2 -1.6 L103.5 -1.2 L102.2 -2.2 L101.4 -2.8 L100.7 -3.9 L100.3 -5.3 L100.1 -6.5 L99.7 -6.8 L98.5 -8.4 L98.3 -7.8 L98.2 -8.4 L98.3 -9.3 L98.6 -10.5 L98.6 -12.0 L98.3 -13.1 L97.8 -14.8 L97.6 -16.1 L97.2 -16.9 L95.4 -15.7 L94.8 -15.8 L94.2 -16.0 L94.3 -18.2 L93.5 -19.4 L93.7 -19.7 L93.1 -19.9 L92.1 -21.2 L92.0 -22.0 L91.4 -22.8 L90.5 -22.8 L90.6 -22.4 L90.3 -21.8 L89.8 -22.0 L89.0 -22.1 L88.9 -21.7 L88.2 -21.7 L86.5 -20.2 L85.1 -19.5 L83.9 -18.3 L82.2 -17.0 L81.7 -16.3 L80.8 -16.0 L80.3 -15.9 L80.0 -15.1 L80.2 -13.8 L80.3 -13.0 L79.9 -12.1 L79.9 -10.4 L79.3 -10.3 L78.9 -9.5 L79.2 -9.2 L78.3 -8.9 L77.5 -8.0 L76.6 -8.9 L76.1 -10.3 L75.7 -11.3 L74.9 -12.7 L74.6 -14.0 L73.5 -16.0 L73.1 -17.9 L72.8 -19.2 L72.8 -20.4 L72.6 -21.4 L71.2 -20.8 L70.5 -21.0 L69.2 -22.1 L69.6 -22.5 L68.2 -23.7 L67.4 -23.9 L66.4 -25.4 L64.5 -25.2 L61.5 -25.1 L59.6 -25.4 L57.4 -25.7 L56.8 -27.1 L55.7 -27.0 L54.7 -26.5 L53.5 -26.8 L52.5 -27.6 L51.5 -27.9 L50.1 -30.1 L48.9 -30.3 L48.0 -30.0 L47.6 -28.5 L48.4 -28.6 L48.8 -27.7 L49.3 -26.8 L50.1 -26.7 L50.2 -25.6 L50.5 -25.0 L51.0 -24.6 L51.4 -24.6 L51.6 -25.8 L51.3 -26.1 L51.6 -24.2 L52.6 -24.2 L54.0 -24.1 L55.0 -22.5 L56.0 -24.9 L56.4 -26.4 L56.5 -24.7 L57.4 -23.9 L58.7 -23.6 L59.8 -22.5 L59.3 -21.4 L58.5 -20.4 L57.7 -19.0 L56.6 -18.6 L56.3 -17.9 L55.3 -17.2 L53.6 -16.7 L52.4 -16.4 L52.2 -15.9 L49.6 -14.7 L48.7 -14.0 L47.4 -13.6 L45.9 -13.3 L44.5 -12.7 L43.5 -12.6 L43.2 -13.2 L43.0 -14.1 L42.6 -15.2 L42.8 -16.3 L42.5 -17.0 L41.8 -18.0 L41.2 -19.0 L39.1 -21.3 L39.0 -22.6 L38.5 -23.6 L37.5 -24.3 L37.2 -25.0 L36.6 -25.8 L35.6 -27.4 L35.1 -28.1 L34.6 -28.1 L34.9 -29.4 L34.6 -29.5 L34.4 -28.3 L33.9 -27.6 L33.1 -28.4 L32.4 -29.9 L32.3 -31.3 L34.3 -31.2 L34.9 -32.8 L35.5 -33.9 L36.0 -34.6 L35.9 -35.4 L36.2 -36.7 L35.6 -36.6 L34.7 -36.8 L34.0 -36.2 L32.5 -36.1 L31.7 -36.6 L30.6 -36.7 L30.4 -36.3 L29.7 -36.1 L28.7 -36.7 L27.6 -36.7 L27.0 -37.7 L26.3 -38.2 L26.8 -39.0 L26.2 -39.5 L27.3 -40.4 L28.8 -40.5 L29.2 -41.2 L31.1 -41.1 L32.3 -41.7 L33.5 -42.0 L35.2 -42.0 L36.9 -41.3 L38.3 -40.9 L39.5 -41.1 L40.4 -41.0 L41.6 -41.5 L41.7 -42.6 L40.9 -43.4 L39.9 -43.4 L38.7 -44.3 L37.5 -44.7 L36.7 -45.2 L37.4 -45.4 L38.2 -46.2 L37.7 -46.6 L39.1 -47.3 L37.4 -47.0 L35.0 -45.7 L35.5 -45.1 L36.5 -45.5 L36.3 -45.1 L33.9 -44.4 L32.6 -45.5 L33.6 -45.9 L31.7 -46.3 L30.7 -46.6 L30.4 -46.0 L29.6 -45.3 L29.1 -44.8 L28.6 -44.3 L28.7 -43.7 L28.0 -43.3 L27.7 -42.6 L28.0 -41.6 L29.0 -41.3 L28.8 -41.1 L27.6 -41.0 L26.4 -40.2 L26.1 -41.0 L24.9 -40.9 L23.7 -40.7 L24.4 -40.1 L23.3 -40.0 L22.8 -40.5 L22.8 -39.7 L23.4 -39.2 L23.5 -38.5 L24.0 -38.2 L24.0 -37.7 L23.1 -37.9 L23.4 -37.4 L22.8 -37.3 L23.2 -36.4 L22.5 -36.4 L21.7 -36.8 L21.3 -37.6 L21.1 -38.3 L20.2 -39.3 L20.0 -39.9 L19.4 -40.3 L19.4 -41.4 L19.2 -42.0 L18.5 -42.5 L17.5 -43.0 L16.0 -43.5 L15.2 -44.2 L14.9 -44.7 L14.3 -45.2 L13.7 -45.5 L13.0 -45.7 L12.3 -45.4 L12.3 -44.6 L12.6 -44.1 L13.5 -43.6 L14.0 -42.8 L15.1 -42.0 L16.2 -41.7 L15.9 -41.5 L17.5 -40.9 L18.5 -40.2 L18.3 -39.8 L17.7 -40.3 L16.9 -40.4 L16.4 -39.8 L17.2 -39.4 L16.6 -38.8 L16.1 -38.0 L15.7 -37.9 L15.9 -38.8 L15.4 -40.0 L14.7 -40.6 L14.0 -40.8 L12.9 -41.3 L11.2 -42.4 L10.5 -42.9 L10.2 -43.9 L8.9 -44.4 L7.9 -43.8 L6.5 -43.1 L4.6 -43.4 L3.1 -43.1 L3.0 -41.9 L2.1 -41.2 L0.8 -41.0 L0.1 -40.1 L-0.3 -39.3 L0.1 -38.7 L-0.7 -37.6 L-1.4 -37.4 L-2.1 -36.7 L-4.4 -36.7 L-5.4 -35.9 L-6.2 -36.4 L-6.5 -36.9 L-7.5 -37.1 L-8.9 -36.9 L-8.7 -37.7 L-8.8 -38.3 L-9.5 -39.0Z"/>
<path d="M-17.1 -21.0 L-16.3 -22.6 L-16.0 -23.7 L-15.1 -24.5 L-14.4 -26.3 L-13.1 -27.6 L-11.7 -28.1 L-9.6 -29.9 L-9.8 -31.2 L-9.3 -32.6 L-7.7 -33.7 L-6.2 -35.1 L-5.9 -35.8 L-5.2 -35.8 L-3.6 -35.4 L-2.2 -35.2 L-1.2 -35.7 L0.5 -36.3 L3.2 -36.8 L4.8 -36.9 L6.3 -37.1 L8.4 -36.9 L9.5 -37.3 L10.2 -37.2 L11.0 -37.1 L10.6 -36.4 L10.9 -35.7 L10.8 -34.8 L10.1 -34.3 L10.9 -33.8 L11.5 -33.1 L13.1 -32.9 L15.2 -32.3 L15.7 -31.4 L18.0 -30.8 L19.1 -30.3 L20.1 -31.0 L19.8 -31.8 L20.9 -32.7 L22.9 -32.6 L24.0 -32.0 L26.5 -31.6 L28.5 -31.0 L30.1 -31.5 L32.0 -30.9 L33.8 -31.0 L34.3 -31.2 L34.3 -30.5 L34.6 -29.5 L34.4 -28.3 L33.9 -27.6 L33.1 -28.4 L32.4 -29.9 L32.7 -28.7 L34.1 -26.1 L35.7 -23.9 L35.5 -23.1 L36.9 -22.0 L37.2 -21.0 L37.1 -19.8 L37.5 -18.6 L38.4 -18.0 L39.3 -15.9 L41.2 -14.5 L42.3 -13.3 L43.1 -12.7 L43.3 -12.0 L42.7 -11.7 L43.5 -11.3 L44.1 -10.4 L45.6 -10.7 L47.5 -11.1 L48.9 -11.4 L50.3 -11.7 L51.1 -12.0 L51.0 -10.6 L50.6 -9.2 L49.5 -6.8 L47.7 -4.2 L45.6 -2.0 L43.1 -0.3 L41.8 1.4 L40.3 2.6 L39.6 4.3 L38.7 5.9 L39.4 6.8 L39.2 8.5 L39.9 10.1 L40.4 11.8 L40.6 14.2 L40.1 16.1 L38.5 17.1 L36.3 18.7 L34.8 19.8 L35.4 21.8 L35.5 23.1 L35.5 24.1 L33.0 25.4 L32.7 26.1 L32.5 28.3 L31.3 29.4 L30.1 31.1 L28.2 32.8 L26.4 33.6 L25.2 33.8 L23.6 33.8 L21.5 34.3 L20.1 34.8 L18.9 34.4 L18.2 33.9 L17.9 32.6 L18.2 31.7 L17.1 29.9 L15.6 27.8 L15.0 26.1 L14.4 23.9 L14.3 22.1 L13.4 20.9 L12.6 19.0 L11.7 17.3 L12.1 14.9 L12.7 13.1 L13.6 12.0 L13.7 10.7 L12.9 9.2 L13.2 8.6 L12.7 6.9 L12.2 6.3 L12.2 5.3 L11.1 4.0 L9.4 2.1 L8.8 0.8 L9.3 -0.3 L9.6 -2.3 L9.8 -3.1 L8.9 -3.9 L8.5 -4.8 L7.1 -4.5 L5.9 -4.3 L5.0 -5.6 L4.3 -6.3 L1.9 -6.1 L-0.5 -5.3 L-2.0 -4.7 L-4.0 -5.2 L-5.8 -5.0 L-7.5 -4.3 L-9.0 -5.0 L-10.8 -6.1 L-12.4 -7.3 L-13.1 -8.2 L-13.7 -9.5 L-14.7 -10.7 L-15.7 -11.5 L-16.6 -12.2 L-16.8 -13.2 L-17.1 -14.4 L-17.6 -14.7 L-16.7 -15.6 L-16.1 -16.5 L-16.1 -18.1 L-16.4 -19.6 L-16.5 -20.6 L-17.1 -21.0Z"/>
<path d="M113.3 22.0 L113.6 24.7 L114.2 26.3 L114.9 29.5 L115.7 31.6 L115.7 33.3 L115.0 34.2 L116.6 35.0 L118.0 35.1 L119.9 34.0 L121.3 33.8 L123.7 33.9 L124.5 32.9 L126.1 32.2 L129.5 31.6 L131.3 31.5 L134.3 32.6 L135.2 34.5 L135.9 34.9 L137.5 34.1 L137.8 32.9 L136.4 35.0 L137.4 35.8 L139.6 36.5 L140.6 38.0 L143.6 38.8 L144.9 38.1 L146.3 39.0 L147.4 38.2 L149.4 37.8 L150.0 36.4 L151.3 33.8 L152.5 32.1 L153.6 28.7 L153.1 26.1 L151.6 24.1 L150.6 22.6 L149.5 21.3 L147.7 19.9 L146.1 18.3 L145.5 16.3 L145.4 15.0 L144.0 14.3 L143.6 12.7 L142.5 10.7 L141.7 12.3 L141.5 13.7 L141.4 16.4 L140.9 17.4 L140.0 17.7 L138.4 16.8 L136.3 15.6 L135.4 15.0 L136.0 13.7 L136.9 12.3 L135.5 12.0 L133.6 11.5 L131.8 11.3 L130.2 13.1 L129.4 14.4 L129.6 15.2 L127.8 14.3 L126.1 14.1 L125.2 15.0 L124.2 16.3 L122.9 16.4 L122.2 17.4 L121.7 18.7 L121.1 19.6 L119.0 20.3 L116.7 20.7 L114.6 22.1 L113.3 22.0Z"/>
<path d="M145.0 40.8 L146.5 41.1 L148.3 40.9 L148.1 42.5 L147.0 43.6 L146.0 43.5 L145.0 42.5 L145.0 40.8Z"/>
<path d="M109.7 -1.5 L111.2 -1.9 L111.8 -2.9 L113.0 -3.1 L114.6 -4.9 L115.5 -5.4 L116.7 -6.9 L117.7 -6.4 L118.4 -5.0 L119.2 -5.4 L118.6 -4.5 L117.3 -3.2 L118.0 -2.3 L119.0 -0.9 L117.8 -0.8 L117.5 0.8 L116.6 1.5 L116.1 4.0 L114.9 4.1 L113.3 3.1 L111.0 3.0 L110.2 2.9 L109.6 1.3 L109.0 -0.4 L109.7 -1.5Z"/>
<path d="M95.3 -5.5 L97.5 -5.2 L99.1 -3.6 L100.6 -2.1 L102.5 -1.4 L103.8 -0.1 L104.4 1.8 L105.6 3.1 L106.1 3.1 L105.8 5.9 L104.7 5.9 L102.6 4.2 L101.4 2.8 L100.1 0.7 L98.6 -1.8 L97.2 -3.3 L95.4 -5.0 L95.3 -5.5Z"/>
<path d="M106.1 5.9 L108.3 6.2 L110.5 6.9 L112.6 6.9 L114.5 7.8 L115.7 8.4 L114.6 8.8 L112.6 8.4 L110.6 8.1 L108.3 7.8 L106.5 7.4 L105.4 6.9 L106.1 5.9Z"/>
<path d="M125.0 -1.6 L123.7 -0.2 L121.0 -0.4 L120.2 -0.2 L120.9 1.4 L123.3 0.6 L121.5 1.9 L122.5 3.2 L123.2 4.7 L122.2 5.3 L121.0 2.6 L120.3 2.9 L120.4 5.5 L119.4 5.4 L119.5 3.5 L118.8 2.8 L119.3 1.4 L120.0 -0.6 L120.9 -1.3 L124.1 -0.9 L125.0 -1.6Z"/>
<path d="M134.1 1.2 L134.4 2.8 L135.5 3.4 L137.4 1.7 L139.2 2.1 L141.0 2.6 L144.6 3.9 L145.8 5.0 L147.6 6.1 L147.2 7.4 L148.7 9.1 L150.0 9.7 L150.8 10.3 L150.0 10.7 L147.9 10.1 L146.6 8.9 L146.1 8.1 L144.7 7.6 L143.3 8.2 L143.4 9.0 L142.1 9.2 L141.0 9.1 L139.1 8.1 L137.6 8.4 L138.7 7.3 L137.9 5.4 L136.0 4.5 L133.7 3.5 L132.8 3.3 L132.0 2.8 L133.7 2.2 L132.2 2.2 L130.9 1.4 L131.9 0.7 L134.1 1.2Z"/>
<path d="M141.4 -41.4 L141.9 -39.2 L141.0 -37.1 L140.8 -35.3 L139.9 -35.0 L137.6 -34.6 L135.8 -33.5 L135.1 -34.6 L132.9 -34.1 L131.0 -34.0 L131.9 -35.6 L134.6 -35.7 L136.7 -37.3 L138.9 -37.8 L140.1 -39.4 L139.9 -40.6 L140.3 -41.2 L141.4 -41.4Z"/>
<path d="M141.9 -45.5 L143.1 -44.5 L145.3 -44.4 L145.5 -43.3 L143.2 -42.0 L141.6 -42.7 L140.0 -41.6 L140.3 -43.3 L141.7 -45.0 L141.9 -45.5Z"/>
<path d="M130.0 -31.0 L131.4 -31.4 L131.9 -33.0 L131.0 -33.9 L130.0 -33.5 L130.0 -31.0Z"/>
<path d="M79.9 -7.0 L80.0 -9.8 L81.8 -7.5 L81.2 -6.2 L80.3 -6.0 L79.9 -7.0Z"/>
<path d="M121.8 -25.0 L122.0 -23.5 L120.9 -21.9 L120.1 -23.6 L121.5 -25.3 L121.8 -25.0Z"/>
<path d="M110.3 -20.3 L111.0 -19.7 L109.4 -18.2 L108.6 -19.4 L110.3 -20.3Z"/>
<path d="M120.4 -18.5 L122.2 -18.5 L121.7 -15.9 L122.0 -14.9 L123.9 -13.8 L122.5 -13.4 L120.7 -14.3 L120.5 -16.2 L120.4 -18.5Z"/>
<path d="M126.4 -8.4 L126.2 -6.3 L125.4 -5.6 L123.9 -6.9 L122.1 -6.9 L123.5 -8.7 L125.4 -9.8 L126.4 -8.4Z"/>
<path d="M49.5 12.5 L50.5 15.2 L49.5 18.0 L48.5 20.5 L47.1 24.9 L45.4 25.6 L44.0 25.0 L43.3 22.0 L44.4 20.1 L44.0 17.4 L44.4 16.2 L46.3 15.8 L48.0 14.1 L48.9 12.5 L49.5 12.5Z"/>
<path d="M-5.7 -50.1 L-3.4 -50.3 L-0.8 -50.8 L1.4 -51.2 L1.7 -52.5 L0.6 -52.9 L-0.8 -54.5 L-1.8 -55.6 L-2.6 -56.1 L-1.8 -57.5 L-4.1 -57.6 L-3.5 -58.5 L-5.0 -58.6 L-6.1 -56.8 L-5.6 -55.3 L-3.1 -54.7 L-4.8 -53.4 L-4.6 -52.3 L-5.2 -51.8 L-3.1 -51.4 L-5.7 -50.1Z"/>
<path d="M-6.2 -53.9 L-6.1 -55.2 L-8.4 -54.7 L-10.0 -54.0 L-9.5 -52.5 L-10.4 -51.9 L-8.5 -51.7 L-6.8 -52.3 L-6.2 -53.9Z"/>
<path d="M-14.5 -66.5 L-13.6 -65.1 L-18.7 -63.5 L-21.8 -63.9 L-23.8 -64.9 L-22.2 -65.4 L-24.3 -65.6 L-21.8 -66.4 L-16.2 -66.5 L-14.5 -66.5Z"/>
<path d="M15.5 -38.2 L15.2 -36.6 L12.4 -37.6 L13.7 -38.1 L15.5 -38.2Z"/>
<path d="M9.2 -41.2 L9.8 -40.5 L9.6 -39.2 L8.4 -39.0 L8.2 -40.9 L9.2 -41.2Z"/>
<path d="M9.4 -43.0 L9.6 -42.2 L9.2 -41.4 L8.6 -42.3 L9.4 -43.0Z"/>
<path d="M23.5 -35.6 L26.3 -35.3 L26.0 -35.0 L24.0 -35.0 L23.5 -35.6Z"/>
<path d="M173.0 34.5 L175.3 37.2 L178.5 37.7 L177.2 39.1 L176.0 41.3 L174.7 41.3 L174.7 39.9 L173.8 39.5 L174.6 38.8 L174.3 36.7 L173.0 34.5Z"/>
<path d="M173.0 40.9 L174.2 41.3 L172.7 43.4 L171.2 44.2 L170.6 45.9 L169.3 46.6 L166.5 45.9 L168.3 44.1 L171.6 41.8 L173.0 40.9Z"/>
<path d="M143.6 -50.7 L144.7 -49.0 L143.2 -49.3 L142.6 -48.0 L143.5 -46.8 L142.1 -46.0 L142.0 -49.2 L141.4 -52.2 L142.6 -54.4 L143.6 -50.7Z"/>
<path d="M51.5 -71.5 L53.5 -73.7 L55.9 -75.0 L61.0 -76.3 L68.2 -76.9 L64.6 -75.7 L58.5 -74.3 L55.6 -72.4 L55.6 -71.5 L57.5 -70.7 L51.5 -71.5Z"/>
</g>
<path d="M46.7 -44.5 L47.5 -43.0 L49.1 -41.3 L49.6 -40.2 L49.4 -37.6 L50.8 -36.9 L53.8 -37.0 L53.7 -38.9 L53.1 -39.3 L52.9 -41.9 L54.0 -41.6 L52.5 -42.8 L51.3 -43.1 L51.3 -44.5 L53.0 -45.3 L53.0 -46.9 L51.2 -47.0 L49.1 -46.4 L47.7 -45.6 L46.7 -44.5Z" fill="#1f4c6d"/>
</g>
<clipPath id="lc"><path d="M-168.0 -65.6 L-166.0 -68.5 L-161.0 -70.3 L-156.0 -71.4 L-150.0 -70.4 L-141.0 -69.7 L-134.0 -69.5 L-128.0 -70.2 L-121.0 -69.5 L-114.0 -68.3 L-108.0 -68.7 L-98.0 -67.8 L-94.0 -69.0 L-89.0 -68.5 L-82.0 -69.5 L-81.5 -66.5 L-86.0 -66.0 L-88.0 -64.2 L-92.5 -62.0 L-94.5 -59.0 L-92.5 -57.0 L-88.0 -56.5 L-85.0 -55.2 L-82.3 -53.0 L-80.0 -51.3 L-78.5 -52.5 L-79.0 -55.0 L-76.5 -57.0 L-78.0 -59.0 L-77.5 -61.5 L-74.0 -62.3 L-70.0 -61.0 L-67.0 -58.5 L-64.5 -60.2 L-61.5 -56.5 L-58.0 -54.5 L-56.0 -52.5 L-59.5 -50.0 L-65.0 -49.2 L-64.0 -47.0 L-61.0 -45.5 L-66.0 -44.5 L-70.0 -43.7 L-70.5 -41.7 L-74.0 -40.5 L-76.0 -38.0 L-75.8 -35.3 L-78.5 -33.8 L-81.0 -31.8 L-80.2 -27.5 L-80.5 -25.2 L-81.8 -26.0 L-82.8 -28.0 L-84.0 -30.0 L-86.0 -30.4 L-89.5 -30.2 L-90.0 -29.2 L-94.0 -29.6 L-97.0 -27.8 L-97.5 -25.0 L-97.8 -22.0 L-95.8 -19.0 L-94.0 -18.2 L-91.5 -18.5 L-90.5 -20.8 L-87.0 -21.5 L-87.5 -18.5 L-88.3 -16.0 L-86.0 -15.9 L-83.5 -15.0 L-83.5 -11.5 L-81.5 -9.0 L-79.5 -9.5 L-77.5 -8.5 L-77.5 -7.2 L-80.0 -7.3 L-81.0 -8.0 L-83.0 -8.3 L-85.7 -10.0 L-86.0 -11.5 L-87.5 -13.0 L-91.5 -14.0 L-94.0 -16.0 L-96.5 -15.7 L-100.0 -17.0 L-105.0 -19.5 L-105.5 -22.5 L-108.0 -25.0 L-111.0 -27.8 L-113.0 -30.5 L-114.7 -31.7 L-114.0 -30.0 L-112.0 -27.0 L-110.0 -24.0 L-109.5 -23.0 L-112.0 -24.5 L-114.0 -27.5 L-115.0 -29.8 L-117.0 -32.5 L-118.5 -34.0 L-120.6 -34.5 L-122.5 -37.5 L-123.8 -39.5 L-124.3 -42.0 L-124.0 -46.5 L-124.7 -48.4 L-123.0 -49.0 L-125.0 -50.5 L-128.0 -52.0 L-130.5 -54.5 L-133.0 -57.0 L-136.0 -58.5 L-139.5 -59.7 L-144.0 -60.2 L-148.0 -60.5 L-151.5 -59.2 L-154.0 -57.5 L-157.5 -56.5 L-161.0 -55.5 L-164.5 -54.5 L-162.0 -56.0 L-158.0 -58.0 L-157.0 -58.8 L-161.5 -58.7 L-164.5 -60.5 L-165.5 -62.3 L-164.0 -63.2 L-161.0 -64.5 L-165.0 -64.6 L-168.0 -65.6Z"/><path d="M-61.5 -66.5 L-64.5 -63.0 L-66.5 -61.8 L-71.5 -63.0 L-77.5 -64.2 L-73.5 -67.8 L-76.0 -70.0 L-80.0 -72.5 L-88.0 -73.5 L-78.5 -73.3 L-71.0 -71.0 L-67.0 -69.5 L-61.5 -66.5Z"/><path d="M-118.0 -73.0 L-119.0 -71.0 L-117.0 -69.8 L-109.0 -68.5 L-101.0 -68.5 L-101.0 -70.0 L-105.0 -73.0 L-112.0 -73.5 L-118.0 -73.0Z"/><path d="M-125.0 -72.0 L-123.0 -71.0 L-116.0 -71.5 L-119.0 -74.5 L-125.0 -74.0 L-125.0 -72.0Z"/><path d="M-87.0 -64.0 L-81.0 -64.0 L-84.0 -66.0 L-87.0 -64.0Z"/><path d="M-59.3 -47.6 L-53.0 -46.7 L-53.0 -49.5 L-55.5 -51.5 L-59.3 -47.6Z"/><path d="M-85.0 -21.9 L-82.0 -23.2 L-77.0 -22.0 L-74.2 -20.2 L-77.5 -19.9 L-81.0 -21.6 L-85.0 -21.9Z"/><path d="M-74.5 -19.8 L-72.0 -19.9 L-68.5 -18.6 L-71.0 -17.6 L-74.4 -18.3 L-74.5 -19.8Z"/><path d="M-77.5 -8.5 L-75.5 -10.8 L-72.0 -12.2 L-71.0 -11.0 L-68.0 -10.7 L-64.0 -10.6 L-61.5 -10.5 L-60.0 -8.5 L-57.5 -6.2 L-54.0 -5.8 L-51.5 -4.2 L-50.0 -1.8 L-49.5 0.0 L-48.0 1.0 L-44.5 2.3 L-41.5 2.9 L-38.5 3.8 L-35.2 5.5 L-34.9 8.0 L-35.5 10.0 L-37.5 12.0 L-39.0 14.0 L-39.0 17.5 L-39.7 19.5 L-41.0 22.0 L-43.0 23.0 L-45.0 23.6 L-47.5 25.0 L-48.5 27.5 L-49.0 29.0 L-51.0 31.0 L-52.5 33.0 L-53.8 34.5 L-55.0 35.0 L-57.0 35.0 L-58.3 34.0 L-57.5 36.5 L-57.5 38.2 L-62.0 39.0 L-62.5 40.5 L-65.0 41.0 L-64.5 42.5 L-65.5 45.0 L-67.5 46.5 L-66.0 48.0 L-68.0 50.0 L-69.0 51.5 L-68.5 52.5 L-70.5 53.5 L-72.0 54.0 L-74.5 52.5 L-75.5 50.0 L-75.5 47.0 L-74.5 44.0 L-73.5 42.0 L-73.7 39.0 L-73.5 37.0 L-72.5 35.0 L-71.6 32.0 L-71.5 28.5 L-70.5 25.0 L-70.2 21.5 L-70.3 18.5 L-71.5 17.5 L-74.5 15.5 L-76.0 14.0 L-77.0 12.0 L-78.5 9.5 L-79.8 7.0 L-81.2 5.5 L-80.5 3.5 L-80.0 2.3 L-80.9 1.0 L-80.0 -0.5 L-79.0 -1.5 L-78.8 -2.5 L-77.5 -4.0 L-77.3 -6.0 L-77.8 -7.5 L-77.5 -8.5Z"/><path d="M-68.5 52.7 L-65.0 55.0 L-69.0 55.5 L-71.0 54.5 L-68.5 52.7Z"/><path d="M-9.5 -39.0 L-8.8 -41.0 L-9.2 -43.2 L-7.0 -43.6 L-2.0 -43.4 L-1.4 -44.5 L-1.2 -46.2 L-2.5 -47.3 L-4.7 -48.0 L-3.0 -48.8 L-1.5 -48.7 L-1.3 -49.7 L0.2 -49.6 L1.5 -50.2 L2.5 -51.1 L3.8 -51.5 L4.5 -52.5 L5.0 -53.3 L7.0 -53.5 L8.5 -53.9 L8.6 -55.5 L8.1 -56.7 L10.0 -57.6 L10.5 -57.0 L10.2 -55.8 L11.0 -55.3 L10.0 -54.5 L12.0 -54.2 L14.0 -53.9 L16.5 -54.5 L19.0 -54.4 L21.0 -55.5 L21.0 -56.8 L21.5 -57.5 L23.5 -57.1 L24.3 -57.8 L24.0 -58.5 L23.4 -59.2 L25.5 -59.6 L28.0 -59.5 L30.0 -59.9 L28.5 -60.5 L26.0 -60.4 L22.8 -59.9 L21.5 -61.0 L21.5 -62.5 L23.0 -63.8 L25.3 -65.0 L25.2 -65.6 L23.0 -65.9 L21.2 -64.8 L19.0 -63.5 L17.5 -62.2 L17.2 -61.0 L18.8 -60.0 L18.5 -59.3 L16.5 -57.5 L16.0 -56.2 L14.5 -56.0 L13.0 -55.4 L12.8 -56.5 L11.8 -57.7 L11.2 -59.0 L10.5 -59.3 L9.5 -59.0 L8.0 -58.1 L6.5 -58.1 L5.5 -59.0 L5.1 -60.5 L5.0 -61.8 L6.0 -62.5 L8.5 -63.5 L10.5 -64.5 L12.5 -66.0 L14.0 -67.5 L15.5 -68.5 L17.5 -69.5 L20.0 -70.0 L23.0 -70.6 L26.0 -71.0 L28.5 -70.9 L31.0 -70.2 L33.0 -69.5 L36.0 -69.0 L40.0 -67.7 L41.0 -66.8 L39.5 -66.0 L35.0 -66.5 L33.5 -66.5 L35.0 -65.0 L37.0 -64.0 L39.5 -64.6 L40.5 -64.5 L42.0 -66.5 L44.0 -66.0 L44.0 -68.3 L46.0 -68.3 L46.5 -67.7 L53.0 -68.5 L54.5 -68.3 L59.0 -68.5 L61.0 -69.8 L66.0 -69.5 L67.0 -70.8 L66.8 -71.8 L69.0 -72.9 L72.7 -72.8 L72.5 -71.0 L72.8 -68.0 L74.0 -67.5 L74.5 -68.5 L77.5 -71.8 L80.5 -73.6 L84.0 -73.8 L86.5 -74.5 L87.0 -75.1 L93.0 -75.9 L98.0 -76.2 L101.0 -76.5 L104.0 -77.7 L106.0 -77.3 L107.5 -76.5 L112.0 -76.4 L113.5 -75.5 L113.0 -73.7 L116.0 -73.6 L120.0 -73.0 L124.0 -73.5 L127.0 -73.5 L129.0 -72.5 L131.0 -71.0 L135.0 -71.6 L139.0 -72.3 L141.0 -72.7 L146.0 -72.3 L150.0 -71.7 L152.5 -70.9 L158.0 -70.9 L160.0 -70.5 L163.0 -69.7 L167.0 -69.6 L170.5 -70.1 L175.7 -69.9 L180.0 -69.0 L180.0 -65.2 L178.5 -64.6 L177.5 -62.5 L174.5 -61.8 L170.5 -60.0 L167.0 -60.3 L163.5 -59.9 L163.0 -58.0 L162.0 -57.8 L163.1 -56.2 L161.8 -54.9 L160.0 -53.2 L158.5 -52.9 L156.8 -51.0 L156.4 -52.5 L155.5 -55.5 L155.9 -56.8 L158.3 -58.0 L160.2 -59.3 L161.9 -60.3 L160.1 -61.6 L159.3 -61.8 L156.7 -61.4 L154.2 -59.8 L152.8 -58.9 L151.3 -58.8 L149.8 -59.7 L146.0 -59.2 L142.2 -59.0 L139.0 -57.5 L135.1 -54.7 L137.2 -54.0 L138.2 -53.8 L139.9 -54.2 L141.4 -53.1 L141.4 -52.2 L140.6 -51.2 L140.5 -50.0 L140.1 -48.4 L138.5 -47.0 L136.2 -45.5 L133.5 -42.8 L132.0 -43.3 L130.8 -42.4 L129.7 -41.0 L129.2 -40.3 L128.0 -39.5 L127.5 -39.8 L128.3 -38.6 L129.5 -37.0 L129.4 -35.5 L126.5 -34.4 L126.4 -36.7 L126.0 -37.8 L125.2 -37.7 L124.7 -38.0 L125.2 -39.4 L124.0 -39.8 L121.6 -39.4 L121.8 -40.9 L121.0 -40.9 L119.0 -39.3 L117.7 -38.7 L118.1 -38.0 L119.0 -37.2 L120.8 -37.9 L122.5 -37.4 L120.6 -36.1 L119.2 -34.9 L120.6 -33.4 L121.9 -31.7 L121.2 -30.7 L122.0 -29.8 L121.7 -28.2 L120.4 -27.0 L119.6 -25.7 L118.7 -24.5 L115.9 -22.8 L114.8 -22.7 L113.2 -22.0 L111.8 -21.5 L110.8 -21.4 L110.2 -20.1 L109.6 -21.0 L108.5 -21.7 L106.7 -20.7 L105.7 -19.0 L106.4 -18.0 L107.4 -16.7 L108.9 -15.3 L109.3 -13.4 L109.2 -11.7 L108.0 -10.6 L106.2 -9.4 L105.0 -8.6 L104.8 -9.2 L105.1 -10.0 L104.3 -10.5 L103.0 -10.9 L102.6 -12.2 L101.7 -12.6 L100.8 -12.6 L100.9 -13.4 L100.1 -13.4 L100.0 -12.3 L99.2 -10.9 L99.5 -9.2 L100.3 -8.3 L100.5 -7.4 L101.6 -6.7 L102.4 -6.1 L103.4 -4.9 L103.3 -3.7 L103.5 -2.8 L104.2 -1.6 L103.5 -1.2 L102.2 -2.2 L101.4 -2.8 L100.7 -3.9 L100.3 -5.3 L100.1 -6.5 L99.7 -6.8 L98.5 -8.4 L98.3 -7.8 L98.2 -8.4 L98.3 -9.3 L98.6 -10.5 L98.6 -12.0 L98.3 -13.1 L97.8 -14.8 L97.6 -16.1 L97.2 -16.9 L95.4 -15.7 L94.8 -15.8 L94.2 -16.0 L94.3 -18.2 L93.5 -19.4 L93.7 -19.7 L93.1 -19.9 L92.1 -21.2 L92.0 -22.0 L91.4 -22.8 L90.5 -22.8 L90.6 -22.4 L90.3 -21.8 L89.8 -22.0 L89.0 -22.1 L88.9 -21.7 L88.2 -21.7 L86.5 -20.2 L85.1 -19.5 L83.9 -18.3 L82.2 -17.0 L81.7 -16.3 L80.8 -16.0 L80.3 -15.9 L80.0 -15.1 L80.2 -13.8 L80.3 -13.0 L79.9 -12.1 L79.9 -10.4 L79.3 -10.3 L78.9 -9.5 L79.2 -9.2 L78.3 -8.9 L77.5 -8.0 L76.6 -8.9 L76.1 -10.3 L75.7 -11.3 L74.9 -12.7 L74.6 -14.0 L73.5 -16.0 L73.1 -17.9 L72.8 -19.2 L72.8 -20.4 L72.6 -21.4 L71.2 -20.8 L70.5 -21.0 L69.2 -22.1 L69.6 -22.5 L68.2 -23.7 L67.4 -23.9 L66.4 -25.4 L64.5 -25.2 L61.5 -25.1 L59.6 -25.4 L57.4 -25.7 L56.8 -27.1 L55.7 -27.0 L54.7 -26.5 L53.5 -26.8 L52.5 -27.6 L51.5 -27.9 L50.1 -30.1 L48.9 -30.3 L48.0 -30.0 L47.6 -28.5 L48.4 -28.6 L48.8 -27.7 L49.3 -26.8 L50.1 -26.7 L50.2 -25.6 L50.5 -25.0 L51.0 -24.6 L51.4 -24.6 L51.6 -25.8 L51.3 -26.1 L51.6 -24.2 L52.6 -24.2 L54.0 -24.1 L55.0 -22.5 L56.0 -24.9 L56.4 -26.4 L56.5 -24.7 L57.4 -23.9 L58.7 -23.6 L59.8 -22.5 L59.3 -21.4 L58.5 -20.4 L57.7 -19.0 L56.6 -18.6 L56.3 -17.9 L55.3 -17.2 L53.6 -16.7 L52.4 -16.4 L52.2 -15.9 L49.6 -14.7 L48.7 -14.0 L47.4 -13.6 L45.9 -13.3 L44.5 -12.7 L43.5 -12.6 L43.2 -13.2 L43.0 -14.1 L42.6 -15.2 L42.8 -16.3 L42.5 -17.0 L41.8 -18.0 L41.2 -19.0 L39.1 -21.3 L39.0 -22.6 L38.5 -23.6 L37.5 -24.3 L37.2 -25.0 L36.6 -25.8 L35.6 -27.4 L35.1 -28.1 L34.6 -28.1 L34.9 -29.4 L34.6 -29.5 L34.4 -28.3 L33.9 -27.6 L33.1 -28.4 L32.4 -29.9 L32.3 -31.3 L34.3 -31.2 L34.9 -32.8 L35.5 -33.9 L36.0 -34.6 L35.9 -35.4 L36.2 -36.7 L35.6 -36.6 L34.7 -36.8 L34.0 -36.2 L32.5 -36.1 L31.7 -36.6 L30.6 -36.7 L30.4 -36.3 L29.7 -36.1 L28.7 -36.7 L27.6 -36.7 L27.0 -37.7 L26.3 -38.2 L26.8 -39.0 L26.2 -39.5 L27.3 -40.4 L28.8 -40.5 L29.2 -41.2 L31.1 -41.1 L32.3 -41.7 L33.5 -42.0 L35.2 -42.0 L36.9 -41.3 L38.3 -40.9 L39.5 -41.1 L40.4 -41.0 L41.6 -41.5 L41.7 -42.6 L40.9 -43.4 L39.9 -43.4 L38.7 -44.3 L37.5 -44.7 L36.7 -45.2 L37.4 -45.4 L38.2 -46.2 L37.7 -46.6 L39.1 -47.3 L37.4 -47.0 L35.0 -45.7 L35.5 -45.1 L36.5 -45.5 L36.3 -45.1 L33.9 -44.4 L32.6 -45.5 L33.6 -45.9 L31.7 -46.3 L30.7 -46.6 L30.4 -46.0 L29.6 -45.3 L29.1 -44.8 L28.6 -44.3 L28.7 -43.7 L28.0 -43.3 L27.7 -42.6 L28.0 -41.6 L29.0 -41.3 L28.8 -41.1 L27.6 -41.0 L26.4 -40.2 L26.1 -41.0 L24.9 -40.9 L23.7 -40.7 L24.4 -40.1 L23.3 -40.0 L22.8 -40.5 L22.8 -39.7 L23.4 -39.2 L23.5 -38.5 L24.0 -38.2 L24.0 -37.7 L23.1 -37.9 L23.4 -37.4 L22.8 -37.3 L23.2 -36.4 L22.5 -36.4 L21.7 -36.8 L21.3 -37.6 L21.1 -38.3 L20.2 -39.3 L20.0 -39.9 L19.4 -40.3 L19.4 -41.4 L19.2 -42.0 L18.5 -42.5 L17.5 -43.0 L16.0 -43.5 L15.2 -44.2 L14.9 -44.7 L14.3 -45.2 L13.7 -45.5 L13.0 -45.7 L12.3 -45.4 L12.3 -44.6 L12.6 -44.1 L13.5 -43.6 L14.0 -42.8 L15.1 -42.0 L16.2 -41.7 L15.9 -41.5 L17.5 -40.9 L18.5 -40.2 L18.3 -39.8 L17.7 -40.3 L16.9 -40.4 L16.4 -39.8 L17.2 -39.4 L16.6 -38.8 L16.1 -38.0 L15.7 -37.9 L15.9 -38.8 L15.4 -40.0 L14.7 -40.6 L14.0 -40.8 L12.9 -41.3 L11.2 -42.4 L10.5 -42.9 L10.2 -43.9 L8.9 -44.4 L7.9 -43.8 L6.5 -43.1 L4.6 -43.4 L3.1 -43.1 L3.0 -41.9 L2.1 -41.2 L0.8 -41.0 L0.1 -40.1 L-0.3 -39.3 L0.1 -38.7 L-0.7 -37.6 L-1.4 -37.4 L-2.1 -36.7 L-4.4 -36.7 L-5.4 -35.9 L-6.2 -36.4 L-6.5 -36.9 L-7.5 -37.1 L-8.9 -36.9 L-8.7 -37.7 L-8.8 -38.3 L-9.5 -39.0Z"/><path d="M-17.1 -21.0 L-16.3 -22.6 L-16.0 -23.7 L-15.1 -24.5 L-14.4 -26.3 L-13.1 -27.6 L-11.7 -28.1 L-9.6 -29.9 L-9.8 -31.2 L-9.3 -32.6 L-7.7 -33.7 L-6.2 -35.1 L-5.9 -35.8 L-5.2 -35.8 L-3.6 -35.4 L-2.2 -35.2 L-1.2 -35.7 L0.5 -36.3 L3.2 -36.8 L4.8 -36.9 L6.3 -37.1 L8.4 -36.9 L9.5 -37.3 L10.2 -37.2 L11.0 -37.1 L10.6 -36.4 L10.9 -35.7 L10.8 -34.8 L10.1 -34.3 L10.9 -33.8 L11.5 -33.1 L13.1 -32.9 L15.2 -32.3 L15.7 -31.4 L18.0 -30.8 L19.1 -30.3 L20.1 -31.0 L19.8 -31.8 L20.9 -32.7 L22.9 -32.6 L24.0 -32.0 L26.5 -31.6 L28.5 -31.0 L30.1 -31.5 L32.0 -30.9 L33.8 -31.0 L34.3 -31.2 L34.3 -30.5 L34.6 -29.5 L34.4 -28.3 L33.9 -27.6 L33.1 -28.4 L32.4 -29.9 L32.7 -28.7 L34.1 -26.1 L35.7 -23.9 L35.5 -23.1 L36.9 -22.0 L37.2 -21.0 L37.1 -19.8 L37.5 -18.6 L38.4 -18.0 L39.3 -15.9 L41.2 -14.5 L42.3 -13.3 L43.1 -12.7 L43.3 -12.0 L42.7 -11.7 L43.5 -11.3 L44.1 -10.4 L45.6 -10.7 L47.5 -11.1 L48.9 -11.4 L50.3 -11.7 L51.1 -12.0 L51.0 -10.6 L50.6 -9.2 L49.5 -6.8 L47.7 -4.2 L45.6 -2.0 L43.1 -0.3 L41.8 1.4 L40.3 2.6 L39.6 4.3 L38.7 5.9 L39.4 6.8 L39.2 8.5 L39.9 10.1 L40.4 11.8 L40.6 14.2 L40.1 16.1 L38.5 17.1 L36.3 18.7 L34.8 19.8 L35.4 21.8 L35.5 23.1 L35.5 24.1 L33.0 25.4 L32.7 26.1 L32.5 28.3 L31.3 29.4 L30.1 31.1 L28.2 32.8 L26.4 33.6 L25.2 33.8 L23.6 33.8 L21.5 34.3 L20.1 34.8 L18.9 34.4 L18.2 33.9 L17.9 32.6 L18.2 31.7 L17.1 29.9 L15.6 27.8 L15.0 26.1 L14.4 23.9 L14.3 22.1 L13.4 20.9 L12.6 19.0 L11.7 17.3 L12.1 14.9 L12.7 13.1 L13.6 12.0 L13.7 10.7 L12.9 9.2 L13.2 8.6 L12.7 6.9 L12.2 6.3 L12.2 5.3 L11.1 4.0 L9.4 2.1 L8.8 0.8 L9.3 -0.3 L9.6 -2.3 L9.8 -3.1 L8.9 -3.9 L8.5 -4.8 L7.1 -4.5 L5.9 -4.3 L5.0 -5.6 L4.3 -6.3 L1.9 -6.1 L-0.5 -5.3 L-2.0 -4.7 L-4.0 -5.2 L-5.8 -5.0 L-7.5 -4.3 L-9.0 -5.0 L-10.8 -6.1 L-12.4 -7.3 L-13.1 -8.2 L-13.7 -9.5 L-14.7 -10.7 L-15.7 -11.5 L-16.6 -12.2 L-16.8 -13.2 L-17.1 -14.4 L-17.6 -14.7 L-16.7 -15.6 L-16.1 -16.5 L-16.1 -18.1 L-16.4 -19.6 L-16.5 -20.6 L-17.1 -21.0Z"/><path d="M113.3 22.0 L113.6 24.7 L114.2 26.3 L114.9 29.5 L115.7 31.6 L115.7 33.3 L115.0 34.2 L116.6 35.0 L118.0 35.1 L119.9 34.0 L121.3 33.8 L123.7 33.9 L124.5 32.9 L126.1 32.2 L129.5 31.6 L131.3 31.5 L134.3 32.6 L135.2 34.5 L135.9 34.9 L137.5 34.1 L137.8 32.9 L136.4 35.0 L137.4 35.8 L139.6 36.5 L140.6 38.0 L143.6 38.8 L144.9 38.1 L146.3 39.0 L147.4 38.2 L149.4 37.8 L150.0 36.4 L151.3 33.8 L152.5 32.1 L153.6 28.7 L153.1 26.1 L151.6 24.1 L150.6 22.6 L149.5 21.3 L147.7 19.9 L146.1 18.3 L145.5 16.3 L145.4 15.0 L144.0 14.3 L143.6 12.7 L142.5 10.7 L141.7 12.3 L141.5 13.7 L141.4 16.4 L140.9 17.4 L140.0 17.7 L138.4 16.8 L136.3 15.6 L135.4 15.0 L136.0 13.7 L136.9 12.3 L135.5 12.0 L133.6 11.5 L131.8 11.3 L130.2 13.1 L129.4 14.4 L129.6 15.2 L127.8 14.3 L126.1 14.1 L125.2 15.0 L124.2 16.3 L122.9 16.4 L122.2 17.4 L121.7 18.7 L121.1 19.6 L119.0 20.3 L116.7 20.7 L114.6 22.1 L113.3 22.0Z"/><path d="M145.0 40.8 L146.5 41.1 L148.3 40.9 L148.1 42.5 L147.0 43.6 L146.0 43.5 L145.0 42.5 L145.0 40.8Z"/><path d="M109.7 -1.5 L111.2 -1.9 L111.8 -2.9 L113.0 -3.1 L114.6 -4.9 L115.5 -5.4 L116.7 -6.9 L117.7 -6.4 L118.4 -5.0 L119.2 -5.4 L118.6 -4.5 L117.3 -3.2 L118.0 -2.3 L119.0 -0.9 L117.8 -0.8 L117.5 0.8 L116.6 1.5 L116.1 4.0 L114.9 4.1 L113.3 3.1 L111.0 3.0 L110.2 2.9 L109.6 1.3 L109.0 -0.4 L109.7 -1.5Z"/><path d="M95.3 -5.5 L97.5 -5.2 L99.1 -3.6 L100.6 -2.1 L102.5 -1.4 L103.8 -0.1 L104.4 1.8 L105.6 3.1 L106.1 3.1 L105.8 5.9 L104.7 5.9 L102.6 4.2 L101.4 2.8 L100.1 0.7 L98.6 -1.8 L97.2 -3.3 L95.4 -5.0 L95.3 -5.5Z"/><path d="M106.1 5.9 L108.3 6.2 L110.5 6.9 L112.6 6.9 L114.5 7.8 L115.7 8.4 L114.6 8.8 L112.6 8.4 L110.6 8.1 L108.3 7.8 L106.5 7.4 L105.4 6.9 L106.1 5.9Z"/><path d="M125.0 -1.6 L123.7 -0.2 L121.0 -0.4 L120.2 -0.2 L120.9 1.4 L123.3 0.6 L121.5 1.9 L122.5 3.2 L123.2 4.7 L122.2 5.3 L121.0 2.6 L120.3 2.9 L120.4 5.5 L119.4 5.4 L119.5 3.5 L118.8 2.8 L119.3 1.4 L120.0 -0.6 L120.9 -1.3 L124.1 -0.9 L125.0 -1.6Z"/><path d="M134.1 1.2 L134.4 2.8 L135.5 3.4 L137.4 1.7 L139.2 2.1 L141.0 2.6 L144.6 3.9 L145.8 5.0 L147.6 6.1 L147.2 7.4 L148.7 9.1 L150.0 9.7 L150.8 10.3 L150.0 10.7 L147.9 10.1 L146.6 8.9 L146.1 8.1 L144.7 7.6 L143.3 8.2 L143.4 9.0 L142.1 9.2 L141.0 9.1 L139.1 8.1 L137.6 8.4 L138.7 7.3 L137.9 5.4 L136.0 4.5 L133.7 3.5 L132.8 3.3 L132.0 2.8 L133.7 2.2 L132.2 2.2 L130.9 1.4 L131.9 0.7 L134.1 1.2Z"/><path d="M141.4 -41.4 L141.9 -39.2 L141.0 -37.1 L140.8 -35.3 L139.9 -35.0 L137.6 -34.6 L135.8 -33.5 L135.1 -34.6 L132.9 -34.1 L131.0 -34.0 L131.9 -35.6 L134.6 -35.7 L136.7 -37.3 L138.9 -37.8 L140.1 -39.4 L139.9 -40.6 L140.3 -41.2 L141.4 -41.4Z"/><path d="M141.9 -45.5 L143.1 -44.5 L145.3 -44.4 L145.5 -43.3 L143.2 -42.0 L141.6 -42.7 L140.0 -41.6 L140.3 -43.3 L141.7 -45.0 L141.9 -45.5Z"/><path d="M130.0 -31.0 L131.4 -31.4 L131.9 -33.0 L131.0 -33.9 L130.0 -33.5 L130.0 -31.0Z"/><path d="M79.9 -7.0 L80.0 -9.8 L81.8 -7.5 L81.2 -6.2 L80.3 -6.0 L79.9 -7.0Z"/><path d="M121.8 -25.0 L122.0 -23.5 L120.9 -21.9 L120.1 -23.6 L121.5 -25.3 L121.8 -25.0Z"/><path d="M110.3 -20.3 L111.0 -19.7 L109.4 -18.2 L108.6 -19.4 L110.3 -20.3Z"/><path d="M120.4 -18.5 L122.2 -18.5 L121.7 -15.9 L122.0 -14.9 L123.9 -13.8 L122.5 -13.4 L120.7 -14.3 L120.5 -16.2 L120.4 -18.5Z"/><path d="M126.4 -8.4 L126.2 -6.3 L125.4 -5.6 L123.9 -6.9 L122.1 -6.9 L123.5 -8.7 L125.4 -9.8 L126.4 -8.4Z"/><path d="M49.5 12.5 L50.5 15.2 L49.5 18.0 L48.5 20.5 L47.1 24.9 L45.4 25.6 L44.0 25.0 L43.3 22.0 L44.4 20.1 L44.0 17.4 L44.4 16.2 L46.3 15.8 L48.0 14.1 L48.9 12.5 L49.5 12.5Z"/><path d="M-5.7 -50.1 L-3.4 -50.3 L-0.8 -50.8 L1.4 -51.2 L1.7 -52.5 L0.6 -52.9 L-0.8 -54.5 L-1.8 -55.6 L-2.6 -56.1 L-1.8 -57.5 L-4.1 -57.6 L-3.5 -58.5 L-5.0 -58.6 L-6.1 -56.8 L-5.6 -55.3 L-3.1 -54.7 L-4.8 -53.4 L-4.6 -52.3 L-5.2 -51.8 L-3.1 -51.4 L-5.7 -50.1Z"/><path d="M-6.2 -53.9 L-6.1 -55.2 L-8.4 -54.7 L-10.0 -54.0 L-9.5 -52.5 L-10.4 -51.9 L-8.5 -51.7 L-6.8 -52.3 L-6.2 -53.9Z"/><path d="M-14.5 -66.5 L-13.6 -65.1 L-18.7 -63.5 L-21.8 -63.9 L-23.8 -64.9 L-22.2 -65.4 L-24.3 -65.6 L-21.8 -66.4 L-16.2 -66.5 L-14.5 -66.5Z"/><path d="M15.5 -38.2 L15.2 -36.6 L12.4 -37.6 L13.7 -38.1 L15.5 -38.2Z"/><path d="M9.2 -41.2 L9.8 -40.5 L9.6 -39.2 L8.4 -39.0 L8.2 -40.9 L9.2 -41.2Z"/><path d="M9.4 -43.0 L9.6 -42.2 L9.2 -41.4 L8.6 -42.3 L9.4 -43.0Z"/><path d="M23.5 -35.6 L26.3 -35.3 L26.0 -35.0 L24.0 -35.0 L23.5 -35.6Z"/><path d="M173.0 34.5 L175.3 37.2 L178.5 37.7 L177.2 39.1 L176.0 41.3 L174.7 41.3 L174.7 39.9 L173.8 39.5 L174.6 38.8 L174.3 36.7 L173.0 34.5Z"/><path d="M173.0 40.9 L174.2 41.3 L172.7 43.4 L171.2 44.2 L170.6 45.9 L169.3 46.6 L166.5 45.9 L168.3 44.1 L171.6 41.8 L173.0 40.9Z"/><path d="M143.6 -50.7 L144.7 -49.0 L143.2 -49.3 L142.6 -48.0 L143.5 -46.8 L142.1 -46.0 L142.0 -49.2 L141.4 -52.2 L142.6 -54.4 L143.6 -50.7Z"/><path d="M51.5 -71.5 L53.5 -73.7 L55.9 -75.0 L61.0 -76.3 L68.2 -76.9 L64.6 -75.7 L58.5 -74.3 L55.6 -72.4 L55.6 -71.5 L57.5 -70.7 L51.5 -71.5Z"/></clipPath>
<g clip-path="url(#lc)"><g filter="url(#bl2)">
<path d="M-18.0 -21.0 L-16.0 -28.0 L-10.0 -30.0 L-6.0 -33.0 L0.0 -34.0 L10.0 -34.0 L12.0 -32.0 L20.0 -31.0 L30.0 -31.5 L34.0 -30.0 L36.0 -23.0 L39.0 -16.0 L36.0 -13.5 L25.0 -13.5 L15.0 -13.5 L5.0 -14.0 L-5.0 -14.5 L-18.0 -15.0Z" fill="#ddccaa"/>
<path d="M34.0 -30.0 L39.0 -20.0 L43.0 -13.0 L52.0 -15.0 L59.0 -22.0 L56.0 -25.0 L50.0 -27.0 L48.0 -31.0 L42.0 -34.0 L38.0 -36.0 L35.0 -34.0Z" fill="#dccaa8"/>
<path d="M44.0 -38.0 L48.0 -31.0 L57.0 -27.0 L62.0 -25.5 L67.0 -25.0 L71.0 -27.0 L71.0 -34.0 L68.0 -38.0 L62.0 -42.0 L56.0 -44.0 L50.0 -42.0 L47.0 -41.0Z" fill="#c8b48c"/>
<path d="M68.0 -38.0 L80.0 -31.0 L88.0 -28.5 L97.0 -29.0 L101.0 -33.0 L106.0 -37.0 L113.0 -40.0 L120.0 -44.0 L117.0 -48.0 L108.0 -47.0 L96.0 -47.0 L88.0 -46.0 L80.0 -44.0 L70.0 -42.0Z" fill="#dcd4b8"/>
<path d="M68.0 -24.0 L75.0 -30.0 L85.0 -26.0 L88.0 -22.0 L80.0 -12.0 L76.0 -10.0 L72.0 -20.0Z" fill="#8c8a5c"/>
<path d="M114.0 22.0 L115.0 32.0 L122.0 33.0 L132.0 31.0 L138.0 33.0 L142.0 35.0 L146.0 32.0 L147.0 26.0 L144.0 20.0 L137.0 17.0 L131.0 15.5 L124.0 18.0 L118.0 20.0Z" fill="#c99a62"/>
<path d="M-122.0 -41.0 L-119.0 -35.0 L-115.0 -31.0 L-111.0 -28.0 L-106.0 -25.0 L-103.0 -27.0 L-104.0 -33.0 L-106.0 -40.0 L-110.0 -45.0 L-117.0 -45.0Z" fill="#c9b798"/>
<path d="M12.0 17.0 L14.0 26.0 L18.0 32.0 L24.0 31.0 L27.0 26.0 L26.0 19.0 L20.0 16.0Z" fill="#bba47c"/>
<path d="M-72.0 40.0 L-70.0 52.0 L-66.0 48.0 L-63.0 40.0 L-66.0 33.0 L-69.0 28.0 L-72.0 34.0Z" fill="#a99a78"/>
<path d="M-62.0 14.0 L-46.0 10.0 L-38.0 6.0 L-40.0 20.0 L-48.0 25.0 L-55.0 30.0 L-62.0 38.0 L-66.0 45.0 L-70.0 50.0 L-72.0 42.0 L-70.0 28.0 L-66.0 20.0Z" fill="#8f8a5e"/>
<path d="M14.0 8.0 L30.0 10.0 L38.0 14.0 L36.0 22.0 L28.0 28.0 L18.0 22.0 L14.0 14.0Z" fill="#8a8058"/>
<path d="M-70.5 30.0 L-70.0 18.0 L-77.0 12.0 L-78.0 8.0 L-75.0 12.0 L-68.0 20.0 L-68.0 28.0Z" fill="#b5a07c"/>
<path d="M41.0 -12.0 L51.0 -12.0 L47.0 -4.0 L40.0 -4.0Z" fill="#c9b690"/>
<path d="M-168.0 -67.0 L-160.0 -71.0 L-140.0 -70.0 L-120.0 -70.0 L-100.0 -68.0 L-85.0 -68.0 L-95.0 -62.0 L-120.0 -64.0 L-150.0 -63.0Z" fill="#7d7d55"/>
<path d="M60.0 -71.0 L100.0 -76.0 L140.0 -73.0 L178.0 -70.0 L178.0 -66.0 L140.0 -68.0 L100.0 -71.0 L60.0 -68.0Z" fill="#6f7048"/>
<path d="M-80.0 -5.0 L-75.0 2.0 L-72.0 12.0 L-60.0 14.0 L-50.0 8.0 L-48.0 2.0 L-55.0 -4.0 L-65.0 -7.0Z" fill="#3c5a22"/>
<path d="M8.0 -4.0 L10.0 5.0 L15.0 8.0 L28.0 8.0 L30.0 0.0 L28.0 -5.0 L15.0 -6.0Z" fill="#3c5a24"/>
<path d="M30.0 -60.0 L40.0 -63.0 L60.0 -63.0 L90.0 -63.0 L120.0 -60.0 L135.0 -55.0 L125.0 -50.0 L100.0 -52.0 L80.0 -55.0 L50.0 -55.0Z" fill="#3b5620"/>
<path d="M-130.0 -58.0 L-110.0 -58.0 L-90.0 -52.0 L-70.0 -50.0 L-60.0 -52.0 L-75.0 -45.0 L-95.0 -47.0 L-120.0 -52.0Z" fill="#42602a"/>
<path d="M95.0 -25.0 L105.0 -22.0 L110.0 -15.0 L105.0 -10.0 L98.0 -12.0 L92.0 -20.0Z" fill="#4a6a2c"/>
<path d="M96.0 -5.0 L104.0 4.0 L118.0 -3.0 L142.0 5.0 L146.0 9.0 L120.0 8.0 L105.0 7.0Z" fill="#3f5e26"/>
</g></g>
<filter id="nz" x="0" y="0" width="100%" height="100%"><feTurbulence type="fractalNoise" baseFrequency="0.35" numOctaves="2" seed="5"/><feColorMatrix type="matrix" values="0 0 0 0 0.15  0 0 0 0 0.2  0 0 0 0 0.05  1.6 0 0 0 -0.75"/></filter>
<g clip-path="url(#lc)"><rect x="-180" y="-90" width="360" height="180" filter="url(#nz)" opacity=".55"/></g>
<path d="M46.7 -44.5 L47.5 -43.0 L49.1 -41.3 L49.6 -40.2 L49.4 -37.6 L50.8 -36.9 L53.8 -37.0 L53.7 -38.9 L53.1 -39.3 L52.9 -41.9 L54.0 -41.6 L52.5 -42.8 L51.3 -43.1 L51.3 -44.5 L53.0 -45.3 L53.0 -46.9 L51.2 -47.0 L49.1 -46.4 L47.7 -45.6 L46.7 -44.5Z" fill="#1f4c6d" filter="url(#bl)"/>
<g filter="url(#bl)">
<path d="M-86.0 -83.0 L-83.7 -77.0 L-76.0 -76.5 L-69.6 -75.9 L-57.9 -72.3 L-50.9 -67.6 L-47.0 -63.0 L-43.9 -60.3 L-39.0 -63.5 L-34.5 -67.6 L-28.0 -71.5 L-22.8 -74.7 L-13.4 -78.2 L-5.3 -79.4 L-4.0 -83.0Z" fill="#f6f6f6"/>
<ellipse cx="-78.8" cy="-74.7" rx="2.6" ry="1.3" fill="#e9ebea" opacity=".75"/>
<ellipse cx="-66.1" cy="-70.5" rx="4.5" ry="1.2" fill="#e9ebea" opacity=".75"/>
<ellipse cx="-93.8" cy="-77.4" rx="3.2" ry="1.3" fill="#e9ebea" opacity=".75"/>
<ellipse cx="-81.7" cy="-78.8" rx="3.0" ry="1.6" fill="#e9ebea" opacity=".75"/>
<ellipse cx="-80.5" cy="-75.5" rx="3.2" ry="1.1" fill="#e9ebea" opacity=".75"/>
<ellipse cx="-121.6" cy="-70.7" rx="2.2" ry="1.5" fill="#e9ebea" opacity=".75"/>
<ellipse cx="-108.9" cy="-71.1" rx="2.3" ry="1.6" fill="#e9ebea" opacity=".75"/>
<ellipse cx="-70.2" cy="-75.9" rx="2.8" ry="1.0" fill="#e9ebea" opacity=".75"/>
<ellipse cx="-106.5" cy="-73.9" rx="2.5" ry="1.2" fill="#e9ebea" opacity=".75"/>
<ellipse cx="-108.4" cy="-78.6" rx="4.9" ry="1.3" fill="#e9ebea" opacity=".75"/>
<ellipse cx="-109.6" cy="-78.7" rx="2.9" ry="1.2" fill="#e9ebea" opacity=".75"/>
<ellipse cx="-124.9" cy="-73.1" rx="3.4" ry="1.3" fill="#e9ebea" opacity=".75"/>
<ellipse cx="-112.3" cy="-74.3" rx="2.0" ry="1.1" fill="#e9ebea" opacity=".75"/>
<ellipse cx="-119.3" cy="-73.3" rx="2.1" ry="0.8" fill="#e9ebea" opacity=".75"/>
<ellipse cx="-105.8" cy="-71.7" rx="3.8" ry="1.3" fill="#e9ebea" opacity=".75"/>
<ellipse cx="-77.7" cy="-75.7" rx="4.1" ry="1.7" fill="#e9ebea" opacity=".75"/>
<ellipse cx="-100.5" cy="-72.6" rx="5.0" ry="0.9" fill="#e9ebea" opacity=".75"/>
<ellipse cx="-79.4" cy="-75.6" rx="2.1" ry="1.6" fill="#e9ebea" opacity=".75"/>
<ellipse cx="-68.8" cy="-75.5" rx="4.2" ry="1.6" fill="#e9ebea" opacity=".75"/>
<ellipse cx="-116.2" cy="-74.5" rx="3.5" ry="1.6" fill="#e9ebea" opacity=".75"/>
<ellipse cx="-74.3" cy="-77.4" rx="3.8" ry="1.7" fill="#e9ebea" opacity=".75"/>
<ellipse cx="-82.0" cy="-76.1" rx="2.7" ry="0.8" fill="#e9ebea" opacity=".75"/>
<ellipse cx="-116.6" cy="-72.9" rx="2.3" ry="1.6" fill="#e9ebea" opacity=".75"/>
<ellipse cx="-89.8" cy="-75.5" rx="3.9" ry="1.5" fill="#e9ebea" opacity=".75"/>
<ellipse cx="-94.2" cy="-69.5" rx="4.4" ry="1.5" fill="#e9ebea" opacity=".75"/>
<ellipse cx="-93.3" cy="-74.6" rx="4.0" ry="0.9" fill="#e9ebea" opacity=".75"/>
<ellipse cx="-78.6" cy="-71.9" rx="2.2" ry="1.1" fill="#e9ebea" opacity=".75"/>
<ellipse cx="-79.1" cy="-71.4" rx="4.2" ry="1.8" fill="#e9ebea" opacity=".75"/>
<ellipse cx="-93.9" cy="-73.1" rx="3.4" ry="1.5" fill="#e9ebea" opacity=".75"/>
<ellipse cx="-76.7" cy="-75.4" rx="3.9" ry="0.9" fill="#e9ebea" opacity=".75"/>
<ellipse cx="-115.7" cy="-71.9" rx="4.2" ry="1.1" fill="#e9ebea" opacity=".75"/>
<ellipse cx="-89.2" cy="-69.6" rx="2.2" ry="1.1" fill="#e9ebea" opacity=".75"/>
<ellipse cx="-82.7" cy="-76.1" rx="4.0" ry="1.1" fill="#e9ebea" opacity=".75"/>
<ellipse cx="-92.5" cy="-73.9" rx="3.4" ry="0.9" fill="#e9ebea" opacity=".75"/>
<ellipse cx="-68.7" cy="-71.4" rx="4.9" ry="1.7" fill="#e9ebea" opacity=".75"/>
<ellipse cx="-123.9" cy="-73.9" rx="4.5" ry="1.8" fill="#e9ebea" opacity=".75"/>
<ellipse cx="-96.7" cy="-72.1" rx="2.6" ry="1.7" fill="#e9ebea" opacity=".75"/>
<ellipse cx="-111.7" cy="-75.0" rx="2.4" ry="1.3" fill="#e9ebea" opacity=".75"/>
<ellipse cx="-65.0" cy="-70.8" rx="4.5" ry="1.3" fill="#e9ebea" opacity=".75"/>
<ellipse cx="-69.1" cy="-76.2" rx="2.7" ry="1.7" fill="#e9ebea" opacity=".75"/>
<ellipse cx="-94.4" cy="-69.7" rx="2.0" ry="1.3" fill="#e9ebea" opacity=".75"/>
<ellipse cx="-96.6" cy="-72.4" rx="2.4" ry="1.1" fill="#e9ebea" opacity=".75"/>
<ellipse cx="-105.1" cy="-77.5" rx="2.0" ry="1.6" fill="#e9ebea" opacity=".75"/>
<ellipse cx="-72.1" cy="-70.6" rx="4.8" ry="1.5" fill="#e9ebea" opacity=".75"/>
<ellipse cx="-68.2" cy="-72.3" rx="3.1" ry="1.2" fill="#e9ebea" opacity=".75"/>
<ellipse cx="-62.1" cy="-75.1" rx="3.1" ry="1.2" fill="#e9ebea" opacity=".75"/>
<ellipse cx="-107.7" cy="-70.0" rx="2.3" ry="1.6" fill="#e9ebea" opacity=".75"/>
<ellipse cx="-107.0" cy="-78.4" rx="2.7" ry="1.1" fill="#e9ebea" opacity=".75"/>
<ellipse cx="-92.8" cy="-71.3" rx="3.1" ry="1.8" fill="#e9ebea" opacity=".75"/>
<ellipse cx="-69.3" cy="-77.2" rx="3.9" ry="1.7" fill="#e9ebea" opacity=".75"/>
<ellipse cx="-65.7" cy="-74.7" rx="4.2" ry="0.8" fill="#e9ebea" opacity=".75"/>
<ellipse cx="-78.9" cy="-73.8" rx="4.3" ry="1.4" fill="#e9ebea" opacity=".75"/>
<ellipse cx="-107.0" cy="-70.0" rx="4.8" ry="0.9" fill="#e9ebea" opacity=".75"/>
<ellipse cx="-95.3" cy="-72.8" rx="2.9" ry="1.5" fill="#e9ebea" opacity=".75"/>
<ellipse cx="-63.5" cy="-72.0" rx="4.0" ry="1.1" fill="#e9ebea" opacity=".75"/>
<ellipse cx="-89.9" cy="-73.2" rx="2.5" ry="1.0" fill="#e9ebea" opacity=".75"/>
<ellipse cx="-111.9" cy="-78.1" rx="3.5" ry="1.0" fill="#e9ebea" opacity=".75"/>
<ellipse cx="-67.9" cy="-79.0" rx="3.3" ry="0.9" fill="#e9ebea" opacity=".75"/>
<ellipse cx="-112.9" cy="-70.4" rx="3.0" ry="0.9" fill="#e9ebea" opacity=".75"/>
<ellipse cx="-109.9" cy="-72.0" rx="3.7" ry="1.7" fill="#e9ebea" opacity=".75"/>
<ellipse cx="-76" cy="-24.5" rx="3" ry="1.6" fill="#5fb0c8" opacity=".8"/>
<path d="M-180.0 -74.2 L-177.5 -73.9 L-175.0 -74.6 L-172.5 -73.6 L-170.0 -74.2 L-167.5 -73.9 L-165.0 -73.3 L-162.5 -74.1 L-160.0 -73.4 L-157.5 -74.1 L-155.0 -73.6 L-152.5 -73.8 L-150.0 -74.4 L-147.5 -75.1 L-145.0 -74.1 L-142.5 -74.3 L-140.0 -75.0 L-137.5 -75.6 L-135.0 -75.1 L-132.5 -74.9 L-130.0 -75.9 L-127.5 -74.5 L-125.0 -75.9 L-122.5 -75.1 L-120.0 -74.9 L-116.7 -75.1 L-113.3 -75.5 L-110.0 -76.5 L-106.7 -75.7 L-103.3 -76.5 L-100.0 -76.7 L-97.5 -76.4 L-95.0 -76.7 L-92.5 -76.1 L-90.0 -76.1 L-87.5 -76.4 L-85.0 -77.3 L-82.5 -77.1 L-80.0 -77.0 L-77.5 -77.6 L-75.0 -77.6 L-72.5 -77.5 L-70.0 -78.5 L-68.3 -78.5 L-66.7 -77.9 L-65.0 -78.6 L-63.3 -78.7 L-61.7 -79.4 L-60.0 -79.4 L-56.7 -78.7 L-53.3 -79.9 L-50.0 -78.6 L-46.7 -79.2 L-43.3 -79.8 L-40.0 -78.9 L-36.7 -79.4 L-33.3 -78.6 L-30.0 -79.5 L-26.7 -79.6 L-23.3 -79.2 L-20.0 -79.6 L-16.7 -78.8 L-13.3 -79.5 L-10.0 -79.4 L-6.7 -79.5 L-3.3 -79.3 L0.0 -80.0 L3.3 -80.4 L6.7 -79.8 L10.0 -80.3 L13.3 -79.5 L16.7 -80.7 L20.0 -80.7 L23.3 -81.4 L26.7 -81.2 L30.0 -80.4 L33.3 -80.7 L36.7 -81.2 L40.0 -80.2 L43.3 -80.9 L46.7 -80.3 L50.0 -80.1 L53.3 -80.0 L56.7 -81.0 L60.0 -79.9 L63.3 -80.0 L66.7 -80.2 L70.0 -80.8 L73.3 -79.5 L76.7 -80.0 L80.0 -80.1 L83.3 -80.4 L86.7 -80.2 L90.0 -80.1 L93.3 -79.0 L96.7 -79.0 L100.0 -78.8 L103.3 -79.4 L106.7 -79.2 L110.0 -77.7 L113.3 -77.5 L116.7 -77.3 L120.0 -77.1 L123.3 -77.2 L126.7 -77.1 L130.0 -76.4 L133.3 -75.7 L136.7 -76.1 L140.0 -75.8 L143.3 -75.9 L146.7 -76.2 L150.0 -75.6 L153.3 -75.0 L156.7 -74.9 L160.0 -74.8 L163.3 -73.8 L166.7 -75.1 L170.0 -74.9 L173.3 -75.1 L176.7 -75.0 L180.0 -74.5 L180.0 -90.0 L-180.0 -90.0Z" fill="#f4f4f4"/>
<path d="M180.0 65.5 L177.5 66.7 L174.4 66.9 L172.7 66.3 L170.8 65.7 L169.2 67.2 L167.3 66.8 L164.9 67.1 L161.2 64.5 L159.4 66.1 L157.0 65.6 L155.2 63.5 L151.2 65.1 L148.5 66.8 L146.7 65.7 L144.6 63.6 L142.7 67.1 L138.8 64.9 L136.9 64.8 L135.4 64.9 L131.4 63.4 L128.2 66.1 L125.8 66.5 L122.3 64.9 L118.9 65.7 L116.8 63.6 L112.9 63.4 L109.4 63.6 L106.0 66.2 L103.2 65.6 L101.6 67.1 L99.4 66.1 L96.2 63.0 L93.6 63.1 L89.6 63.0 L87.2 66.2 L85.1 66.3 L83.1 64.5 L79.4 63.5 L76.7 64.3 L73.2 66.8 L70.0 63.2 L66.6 63.9 L63.9 66.4 L60.4 65.7 L56.9 62.9 L54.4 65.4 L50.5 64.0 L48.6 66.6 L46.7 63.2 L43.2 66.6 L39.7 62.9 L36.5 65.7 L33.6 66.6 L32.1 62.9 L29.0 64.9 L25.1 65.3 L21.5 63.6 L19.4 66.1 L17.2 66.1 L14.2 66.1 L11.7 66.6 L7.9 65.6 L5.3 64.6 L1.5 65.3 L-2.3 65.0 L-5.1 64.9 L-6.7 65.3 L-8.6 67.2 L-12.1 66.4 L-14.8 64.0 L-17.7 65.8 L-20.5 64.8 L-23.9 66.7 L-26.8 66.1 L-29.0 63.8 L-31.8 64.7 L-35.2 63.2 L-37.8 64.5 L-40.6 64.9 L-43.8 65.2 L-46.6 65.1 L-50.5 64.1 L-54.2 63.1 L-56.3 64.7 L-60.2 63.5 L-62.0 66.7 L-64.6 66.9 L-66.7 66.9 L-69.9 63.8 L-73.7 66.5 L-76.9 64.3 L-78.8 63.3 L-82.7 66.2 L-86.6 65.4 L-89.3 62.8 L-92.9 66.5 L-95.5 64.9 L-97.8 66.3 L-100.1 64.0 L-101.7 64.8 L-104.3 67.1 L-106.6 64.5 L-109.4 66.9 L-113.4 63.7 L-117.3 66.7 L-119.4 67.0 L-122.9 66.0 L-124.7 65.3 L-128.5 63.6 L-130.6 66.5 L-134.4 64.7 L-137.7 66.8 L-139.3 64.2 L-141.9 66.9 L-145.7 64.4 L-149.2 66.8 L-152.9 66.9 L-156.5 65.2 L-158.9 64.8 L-162.7 66.0 L-164.5 64.9 L-166.6 66.7 L-168.5 67.0 L-170.5 65.8 L-172.8 63.9 L-175.0 65.0 L-177.0 65.7 L-178.5 66.1 L-180.0 65.0 L-180.0 90.0 L180.0 90.0Z" fill="#f6f6f6"/>
<ellipse cx="89.9" cy="62.4" rx="2.7" ry="1.3" fill="#eef0f1" opacity=".85"/>
<ellipse cx="-44.3" cy="62.8" rx="1.7" ry="1.1" fill="#eef0f1" opacity=".85"/>
<ellipse cx="168.4" cy="63.9" rx="3.0" ry="1.4" fill="#eef0f1" opacity=".85"/>
<ellipse cx="130.6" cy="63.4" rx="2.3" ry="1.0" fill="#eef0f1" opacity=".85"/>
<ellipse cx="-36.1" cy="62.3" rx="4.4" ry="1.6" fill="#eef0f1" opacity=".85"/>
<ellipse cx="134.2" cy="64.4" rx="1.6" ry="1.5" fill="#eef0f1" opacity=".85"/>
<ellipse cx="142.5" cy="62.1" rx="3.3" ry="0.8" fill="#eef0f1" opacity=".85"/>
<ellipse cx="-39.1" cy="59.9" rx="4.0" ry="1.7" fill="#eef0f1" opacity=".85"/>
<ellipse cx="170.0" cy="63.3" rx="1.8" ry="1.0" fill="#eef0f1" opacity=".85"/>
<ellipse cx="8.1" cy="61.1" rx="4.3" ry="1.5" fill="#eef0f1" opacity=".85"/>
<ellipse cx="53.0" cy="60.7" rx="2.9" ry="1.4" fill="#eef0f1" opacity=".85"/>
<ellipse cx="-165.8" cy="60.6" rx="2.2" ry="1.7" fill="#eef0f1" opacity=".85"/>
<ellipse cx="52.4" cy="63.0" rx="1.9" ry="1.1" fill="#eef0f1" opacity=".85"/>
<ellipse cx="49.1" cy="61.0" rx="1.8" ry="0.9" fill="#eef0f1" opacity=".85"/>
<ellipse cx="8.8" cy="61.6" rx="2.7" ry="1.0" fill="#eef0f1" opacity=".85"/>
<ellipse cx="36.4" cy="64.4" rx="2.4" ry="1.3" fill="#eef0f1" opacity=".85"/>
<ellipse cx="165.2" cy="61.3" rx="4.2" ry="1.3" fill="#eef0f1" opacity=".85"/>
<ellipse cx="-95.5" cy="63.3" rx="4.4" ry="1.5" fill="#eef0f1" opacity=".85"/>
<ellipse cx="-69.3" cy="64.4" rx="3.0" ry="1.5" fill="#eef0f1" opacity=".85"/>
<ellipse cx="-28.8" cy="63.2" rx="3.5" ry="1.7" fill="#eef0f1" opacity=".85"/>
<ellipse cx="-98.4" cy="64.3" rx="2.5" ry="1.2" fill="#eef0f1" opacity=".85"/>
<ellipse cx="65.7" cy="63.5" rx="3.9" ry="1.5" fill="#eef0f1" opacity=".85"/>
<ellipse cx="1.8" cy="63.5" rx="4.4" ry="1.1" fill="#eef0f1" opacity=".85"/>
<ellipse cx="115.2" cy="63.3" rx="2.2" ry="1.6" fill="#eef0f1" opacity=".85"/>
<ellipse cx="-73.8" cy="59.7" rx="3.0" ry="1.0" fill="#eef0f1" opacity=".85"/>
<ellipse cx="-99.6" cy="62.4" rx="3.5" ry="1.7" fill="#eef0f1" opacity=".85"/>
<ellipse cx="-127.3" cy="62.5" rx="2.1" ry="1.8" fill="#eef0f1" opacity=".85"/>
<ellipse cx="-128.9" cy="64.2" rx="1.7" ry="1.2" fill="#eef0f1" opacity=".85"/>
<ellipse cx="143.3" cy="60.1" rx="3.7" ry="1.8" fill="#eef0f1" opacity=".85"/>
<ellipse cx="155.4" cy="62.9" rx="2.1" ry="1.7" fill="#eef0f1" opacity=".85"/>
<ellipse cx="88.7" cy="64.3" rx="3.5" ry="1.2" fill="#eef0f1" opacity=".85"/>
<ellipse cx="-45.4" cy="62.8" rx="2.0" ry="0.8" fill="#eef0f1" opacity=".85"/>
<ellipse cx="-79.3" cy="62.7" rx="4.4" ry="0.9" fill="#eef0f1" opacity=".85"/>
<ellipse cx="167.1" cy="63.5" rx="2.6" ry="1.6" fill="#eef0f1" opacity=".85"/>
<ellipse cx="115.9" cy="62.3" rx="1.6" ry="1.3" fill="#eef0f1" opacity=".85"/>
<ellipse cx="-45.8" cy="59.9" rx="2.1" ry="1.2" fill="#eef0f1" opacity=".85"/>
<ellipse cx="142.9" cy="64.3" rx="2.7" ry="1.6" fill="#eef0f1" opacity=".85"/>
<ellipse cx="96.0" cy="64.3" rx="1.6" ry="0.9" fill="#eef0f1" opacity=".85"/>
<ellipse cx="151.2" cy="63.2" rx="3.7" ry="1.7" fill="#eef0f1" opacity=".85"/>
<ellipse cx="-57.9" cy="63.1" rx="4.4" ry="1.4" fill="#eef0f1" opacity=".85"/>
<ellipse cx="-85.6" cy="60.9" rx="2.4" ry="1.1" fill="#eef0f1" opacity=".85"/>
<ellipse cx="-178.6" cy="60.7" rx="4.2" ry="1.4" fill="#eef0f1" opacity=".85"/>
<ellipse cx="159.6" cy="64.4" rx="2.2" ry="1.3" fill="#eef0f1" opacity=".85"/>
<ellipse cx="164.4" cy="59.7" rx="2.7" ry="1.1" fill="#eef0f1" opacity=".85"/>
<ellipse cx="-25.2" cy="62.0" rx="4.3" ry="1.0" fill="#eef0f1" opacity=".85"/>
<ellipse cx="108.9" cy="60.8" rx="4.0" ry="1.6" fill="#eef0f1" opacity=".85"/>
<ellipse cx="38.6" cy="62.9" rx="2.5" ry="1.2" fill="#eef0f1" opacity=".85"/>
<ellipse cx="101.6" cy="64.1" rx="2.1" ry="1.6" fill="#eef0f1" opacity=".85"/>
<ellipse cx="-91.0" cy="64.2" rx="1.6" ry="1.4" fill="#eef0f1" opacity=".85"/>
<ellipse cx="-62.7" cy="59.6" rx="4.2" ry="1.8" fill="#eef0f1" opacity=".85"/>
<ellipse cx="-84.6" cy="64.1" rx="1.8" ry="1.3" fill="#eef0f1" opacity=".85"/>
<ellipse cx="75.5" cy="62.3" rx="2.2" ry="1.2" fill="#eef0f1" opacity=".85"/>
<ellipse cx="43.3" cy="61.1" rx="3.7" ry="1.6" fill="#eef0f1" opacity=".85"/>
<ellipse cx="59.2" cy="63.9" rx="4.0" ry="1.1" fill="#eef0f1" opacity=".85"/>
<ellipse cx="24.1" cy="62.6" rx="3.7" ry="1.0" fill="#eef0f1" opacity=".85"/>
<ellipse cx="-90.9" cy="63.3" rx="2.0" ry="1.7" fill="#eef0f1" opacity=".85"/>
<ellipse cx="28.2" cy="62.9" rx="2.7" ry="1.8" fill="#eef0f1" opacity=".85"/>
<ellipse cx="2.6" cy="63.3" rx="3.9" ry="1.5" fill="#eef0f1" opacity=".85"/>
<ellipse cx="176.7" cy="64.0" rx="2.9" ry="1.6" fill="#eef0f1" opacity=".85"/>
<ellipse cx="122.6" cy="59.9" rx="1.6" ry="1.1" fill="#eef0f1" opacity=".85"/>
<ellipse cx="-137.1" cy="63.6" rx="4.4" ry="1.4" fill="#eef0f1" opacity=".85"/>
<ellipse cx="154.9" cy="62.6" rx="4.1" ry="1.2" fill="#eef0f1" opacity=".85"/>
<ellipse cx="-86.4" cy="60.6" rx="4.3" ry="0.9" fill="#eef0f1" opacity=".85"/>
<ellipse cx="34.6" cy="61.4" rx="2.2" ry="1.2" fill="#eef0f1" opacity=".85"/>
<ellipse cx="-129.1" cy="63.5" rx="2.3" ry="1.4" fill="#eef0f1" opacity=".85"/>
<ellipse cx="54.6" cy="63.5" rx="1.5" ry="1.1" fill="#eef0f1" opacity=".85"/>
<ellipse cx="64.2" cy="63.6" rx="2.4" ry="1.0" fill="#eef0f1" opacity=".85"/>
<ellipse cx="106.3" cy="61.8" rx="1.7" ry="0.9" fill="#eef0f1" opacity=".85"/>
<ellipse cx="-37.7" cy="61.7" rx="3.4" ry="0.9" fill="#eef0f1" opacity=".85"/>
<ellipse cx="-121.1" cy="61.0" rx="2.7" ry="1.1" fill="#eef0f1" opacity=".85"/>
<ellipse cx="-69.3" cy="68.3" rx="1.9" ry="0.6" fill="#d5d9dc" opacity=".6"/>
<ellipse cx="-51.4" cy="72.1" rx="3.6" ry="0.8" fill="#d5d9dc" opacity=".6"/>
<ellipse cx="-49.0" cy="73.6" rx="3.2" ry="0.4" fill="#d5d9dc" opacity=".6"/>
<ellipse cx="-177.9" cy="68.7" rx="2.3" ry="0.7" fill="#d5d9dc" opacity=".6"/>
<ellipse cx="-33.8" cy="68.8" rx="2.4" ry="0.4" fill="#d5d9dc" opacity=".6"/>
<ellipse cx="-174.7" cy="71.1" rx="2.9" ry="0.8" fill="#d5d9dc" opacity=".6"/>
<ellipse cx="-147.9" cy="70.6" rx="2.1" ry="0.6" fill="#d5d9dc" opacity=".6"/>
<ellipse cx="-127.5" cy="73.0" rx="2.6" ry="0.8" fill="#d5d9dc" opacity=".6"/>
<ellipse cx="-140.8" cy="71.6" rx="3.4" ry="0.8" fill="#d5d9dc" opacity=".6"/>
<ellipse cx="-109.0" cy="74.1" rx="3.8" ry="0.8" fill="#d5d9dc" opacity=".6"/>
<ellipse cx="-6.2" cy="74.6" rx="3.8" ry="0.5" fill="#d5d9dc" opacity=".6"/>
<ellipse cx="145.5" cy="70.7" rx="3.5" ry="0.4" fill="#d5d9dc" opacity=".6"/>
<ellipse cx="102.9" cy="73.4" rx="2.2" ry="0.7" fill="#d5d9dc" opacity=".6"/>
<ellipse cx="118.5" cy="73.7" rx="1.7" ry="0.5" fill="#d5d9dc" opacity=".6"/>
<ellipse cx="6.4" cy="72.3" rx="1.4" ry="0.4" fill="#d5d9dc" opacity=".6"/>
<ellipse cx="81.0" cy="68.7" rx="1.1" ry="0.6" fill="#d5d9dc" opacity=".6"/>
<ellipse cx="92.7" cy="74.7" rx="3.5" ry="0.4" fill="#d5d9dc" opacity=".6"/>
<ellipse cx="35.8" cy="71.1" rx="2.9" ry="0.5" fill="#d5d9dc" opacity=".6"/>
<ellipse cx="-28.8" cy="70.9" rx="2.3" ry="0.6" fill="#d5d9dc" opacity=".6"/>
<ellipse cx="-19.2" cy="71.9" rx="1.1" ry="0.6" fill="#d5d9dc" opacity=".6"/>
<ellipse cx="-3.8" cy="73.4" rx="3.3" ry="0.7" fill="#d5d9dc" opacity=".6"/>
<ellipse cx="-15.0" cy="73.7" rx="2.4" ry="0.4" fill="#d5d9dc" opacity=".6"/>
<ellipse cx="-133.8" cy="72.0" rx="1.3" ry="0.5" fill="#d5d9dc" opacity=".6"/>
<ellipse cx="3.7" cy="74.7" rx="2.9" ry="0.3" fill="#d5d9dc" opacity=".6"/>
<ellipse cx="84.1" cy="69.6" rx="2.5" ry="0.3" fill="#d5d9dc" opacity=".6"/>
<ellipse cx="1.4" cy="72.4" rx="3.9" ry="0.4" fill="#d5d9dc" opacity=".6"/>
<ellipse cx="128.5" cy="68.0" rx="3.2" ry="0.7" fill="#d5d9dc" opacity=".6"/>
<ellipse cx="-110.3" cy="68.1" rx="2.5" ry="0.8" fill="#d5d9dc" opacity=".6"/>
<ellipse cx="149.8" cy="73.8" rx="3.4" ry="0.8" fill="#d5d9dc" opacity=".6"/>
<ellipse cx="-156.4" cy="72.5" rx="3.3" ry="0.4" fill="#d5d9dc" opacity=".6"/>
<ellipse cx="142.8" cy="73.1" rx="3.4" ry="0.4" fill="#d5d9dc" opacity=".6"/>
<ellipse cx="0.8" cy="68.6" rx="1.6" ry="0.4" fill="#d5d9dc" opacity=".6"/>
<ellipse cx="2.2" cy="72.8" rx="1.1" ry="0.4" fill="#d5d9dc" opacity=".6"/>
<ellipse cx="-122.0" cy="68.4" rx="3.0" ry="0.7" fill="#d5d9dc" opacity=".6"/>
<ellipse cx="-119.3" cy="69.5" rx="1.3" ry="0.6" fill="#d5d9dc" opacity=".6"/>
<ellipse cx="49.1" cy="72.5" rx="3.6" ry="0.6" fill="#d5d9dc" opacity=".6"/>
<ellipse cx="28.8" cy="68.8" rx="1.3" ry="0.8" fill="#d5d9dc" opacity=".6"/>
<ellipse cx="46.7" cy="72.2" rx="3.4" ry="0.4" fill="#d5d9dc" opacity=".6"/>
<ellipse cx="176.6" cy="71.0" rx="2.1" ry="0.7" fill="#d5d9dc" opacity=".6"/>
<ellipse cx="-20.8" cy="73.8" rx="3.2" ry="0.3" fill="#d5d9dc" opacity=".6"/>
</g>
<rect x="-0.6" y="-51.5" width="1.5" height="1.5" fill="#ece34a"/>
<rect x="3.6" y="-52.0" width="1.5" height="1.5" fill="#ece34a"/>
<rect x="6.5" y="-50.5" width="1.5" height="1.5" fill="#ece34a"/>
<rect x="0.9" y="-47.3" width="1.5" height="1.5" fill="#ece34a"/>
<rect x="4.4" y="-47.3" width="1.5" height="1.5" fill="#ece34a"/>
<rect x="7.2" y="-46.2" width="1.5" height="1.5" fill="#ece34a"/>
<rect x="13.4" y="-46.2" width="1.5" height="1.5" fill="#ece34a"/>
<rect x="16.2" y="-47.3" width="1.5" height="1.5" fill="#ece34a"/>
<rect x="18.7" y="-46.7" width="1.5" height="1.5" fill="#ece34a"/>
<rect x="-3.3" y="-39.9" width="1.5" height="1.5" fill="#ece34a"/>
<rect x="-8.2" y="-37.7" width="1.5" height="1.5" fill="#ece34a"/>
<rect x="2.3" y="-38.8" width="1.5" height="1.5" fill="#ece34a"/>
<rect x="11.8" y="-40.9" width="1.5" height="1.5" fill="#ece34a"/>
<rect x="-13.3" y="-8.5" width="1.5" height="1.5" fill="#ece34a"/>
<rect x="-58.7" y="34.1" width="1.5" height="1.5" fill="#ece34a"/>
</svg>
<div class="t" style="left:169.8px;top:388.5px;font-family:'Liberation Mono',monospace;font-size:6.2px;color:#4646d8;white-space:pre;transform:scaleX(0.718);-webkit-text-stroke:.25px #4646d8">C R X - MAM - Band: 2m , 6m , 10m  - generated on 11/04 05:25 PM  last 1 hour</div>
<div class="card" style="left:476.5px;top:218px;width:340px;height:240px"></div>
<div class="t b" style="left:483.50px;top:225.14px;font-size:8.10px;color:#151515;transform:scaleX(0.9090);-webkit-text-stroke:0.12px #151515">Welcome !</div>
<style>.wl{left:483.60px;font-size:6.50px;color:#2a2a2a;transform-origin:0 0;-webkit-text-stroke:.16px #2a2a2a}.wl b{font-weight:700;color:#151515}</style>
<div class="t wl" style="top:242.90px;transform:scaleX(0.9214)">The main aim of the project "CRXCluster" is to purpose innovative tools open to amator radio communitie and on the</div>
<div class="t wl" style="top:251.75px;transform:scaleX(0.9343)">"cloud ("no software installation required).</div>
<div class="t wl" style="top:269.45px;transform:scaleX(0.8822)">Tools available :</div>
<div class="t wl" style="top:278.30px;transform:scaleX(0.9266)">- <b>logbook</b> with import/export data.</div>
<div class="t wl" style="top:287.15px;transform:scaleX(0.9104)">- <b>eMap</b> this is a map application witch work with dx spots data, users data, grayline and more !</div>
<div class="t wl" style="top:296.00px;transform:scaleX(0.9010)">- <b>band map</b> this component display a band map and based on dxcluster-spots data.</div>
<div class="t wl" style="top:304.85px;transform:scaleX(0.8966)">- <b>vQSL</b> a complete QSL manager and also mailbox system, with verification of QSO.</div>
<div class="t wl" style="top:313.70px;transform:scaleX(0.9021)">- <b>Web dxcluster</b> here you'll be able to show spot and also dxcc status (contact or not).</div>
<div class="t wl" style="top:322.55px;transform:scaleX(0.9115)">- <b>Dxcluster Telnet</b> here you can connect to the cluster with various program like logger32, Ham radio deluxe.</div>
<div class="t wl" style="top:331.40px;transform:scaleX(0.9031)">- <b>Dxcluster spot tx/rx</b> with advanced filter's (QRG/SPOT CALL/SPOT FROM/ORIGIN OF SPOT)</div>
<div class="t wl" style="top:340.25px;transform:scaleX(0.9007)">- <b>Dxcluster mail alert</b>, you can define your IARU zone filter for the spot sender on each dxcc.</div>
<div class="t wl" style="top:349.10px;transform:scaleX(0.9160)">- <b>Chat</b>, with realtime online user list, private chat this is good for "radio sked".</div>
<div class="t wl" style="top:357.95px;transform:scaleX(0.9172)">- <b>Azimut/Distance</b> of QSO and from your QTH (with QRA LOCATOR implementation).</div>
<div class="t wl" style="top:366.80px;transform:scaleX(0.8946)">- <b>Search engine</b> you can search into the stop database and inside your logbook database.</div>
<div class="t wl" style="top:375.65px;transform:scaleX(0.9018)">- <b>Band status view</b> not neccessary to look on the dxcluster view with this tool and you are ready for dxing (display a</div>
<div class="t wl" style="top:384.50px;transform:scaleX(0.9502)">matrix with bands/continent/nb spots) !</div>
<div class="t wl" style="top:393.35px;transform:scaleX(0.8981)">- <b>Propagation view</b> you have a tool to calcul MUF and also a display provide by N0NBH.</div>
<div class="t wl" style="top:411.05px;transform:scaleX(0.9240)">Good Dx with !</div>
<div class="t wl" style="top:428.75px;transform:scaleX(0.8706)">The CRX team.</div>
</body></html>
